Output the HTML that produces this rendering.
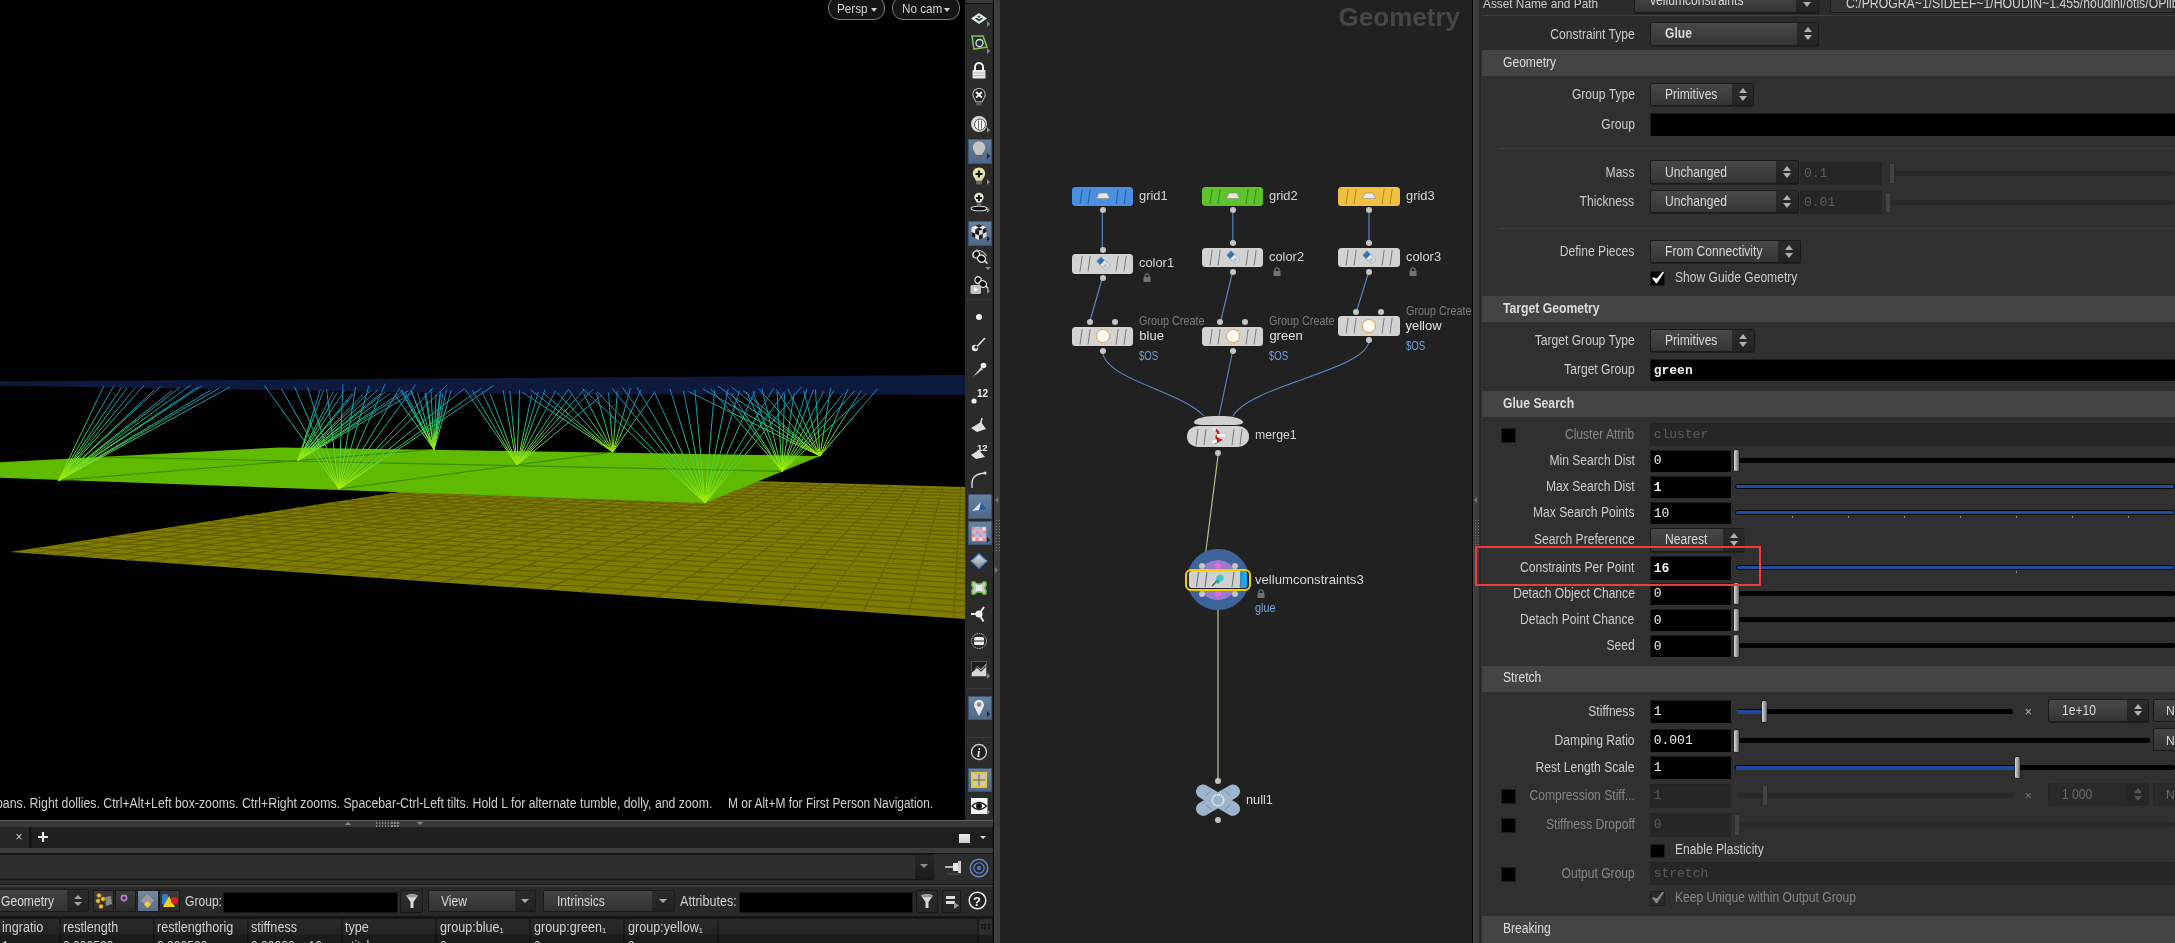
<!DOCTYPE html>
<html><head><meta charset="utf-8"><style>
html,body{margin:0;padding:0;width:2175px;height:943px;overflow:hidden;background:#000;font-family:"Liberation Sans",sans-serif}
div{box-sizing:border-box}
</style></head><body>
<div style="position:relative;width:2175px;height:943px;overflow:hidden;will-change:transform">
<div style="position:absolute;left:0px;top:0px;width:965px;height:820px;background:#000"></div><svg width="965" height="820" viewBox="0 0 965 820" style="position:absolute;left:0;top:0">
<defs><linearGradient id="f1" gradientUnits="userSpaceOnUse" x1="0" y1="388" x2="0" y2="480.3"><stop offset="0" stop-color="#1a80c4"/><stop offset="0.2" stop-color="#12a0b0"/><stop offset="0.5" stop-color="#22c078"/><stop offset="1" stop-color="#a8ec00"/></linearGradient><linearGradient id="f2" gradientUnits="userSpaceOnUse" x1="0" y1="392" x2="0" y2="460.5"><stop offset="0" stop-color="#1a80c4"/><stop offset="0.2" stop-color="#12a0b0"/><stop offset="0.5" stop-color="#22c078"/><stop offset="1" stop-color="#a8ec00"/></linearGradient><linearGradient id="f3" gradientUnits="userSpaceOnUse" x1="0" y1="386" x2="0" y2="489"><stop offset="0" stop-color="#1a80c4"/><stop offset="0.2" stop-color="#12a0b0"/><stop offset="0.5" stop-color="#22c078"/><stop offset="1" stop-color="#a8ec00"/></linearGradient><linearGradient id="f4" gradientUnits="userSpaceOnUse" x1="0" y1="392" x2="0" y2="449.3"><stop offset="0" stop-color="#1a80c4"/><stop offset="0.2" stop-color="#12a0b0"/><stop offset="0.5" stop-color="#22c078"/><stop offset="1" stop-color="#a8ec00"/></linearGradient><linearGradient id="f5" gradientUnits="userSpaceOnUse" x1="0" y1="392" x2="0" y2="465"><stop offset="0" stop-color="#1a80c4"/><stop offset="0.2" stop-color="#12a0b0"/><stop offset="0.5" stop-color="#22c078"/><stop offset="1" stop-color="#a8ec00"/></linearGradient><linearGradient id="f6" gradientUnits="userSpaceOnUse" x1="0" y1="391" x2="0" y2="452"><stop offset="0" stop-color="#1a80c4"/><stop offset="0.2" stop-color="#12a0b0"/><stop offset="0.5" stop-color="#22c078"/><stop offset="1" stop-color="#a8ec00"/></linearGradient><linearGradient id="f7" gradientUnits="userSpaceOnUse" x1="0" y1="389" x2="0" y2="503"><stop offset="0" stop-color="#1a80c4"/><stop offset="0.2" stop-color="#12a0b0"/><stop offset="0.5" stop-color="#22c078"/><stop offset="1" stop-color="#a8ec00"/></linearGradient><linearGradient id="f8" gradientUnits="userSpaceOnUse" x1="0" y1="391" x2="0" y2="471.3"><stop offset="0" stop-color="#1a80c4"/><stop offset="0.2" stop-color="#12a0b0"/><stop offset="0.5" stop-color="#22c078"/><stop offset="1" stop-color="#a8ec00"/></linearGradient><linearGradient id="f9" gradientUnits="userSpaceOnUse" x1="0" y1="389" x2="0" y2="456"><stop offset="0" stop-color="#1a80c4"/><stop offset="0.2" stop-color="#12a0b0"/><stop offset="0.5" stop-color="#22c078"/><stop offset="1" stop-color="#a8ec00"/></linearGradient></defs>
<defs><linearGradient id="fan" gradientUnits="userSpaceOnUse" x1="0" y1="386" x2="0" y2="500"><stop offset="0" stop-color="#1580c0"/><stop offset="0.45" stop-color="#20b088"/><stop offset="1" stop-color="#a8e800"/></linearGradient></defs>
<polygon points="10.0,552.0 516.0,474.0 1118.8,491.5 1400.0,649.7" fill="#7f7c00"/>
<path d="M529.2 474.4L32.0 553.5M542.0 474.8L54.6 555.1M555.0 475.1L77.8 556.8M568.2 475.5L101.6 558.4M581.6 475.9L126.0 560.2M595.2 476.3L151.1 561.9M609.0 476.7L176.8 563.7M623.0 477.1L203.3 565.6M637.2 477.5L230.4 567.5M651.5 477.9L258.3 569.5M666.1 478.4L286.9 571.5M680.9 478.8L316.3 573.5M695.9 479.2L346.4 575.7M711.1 479.7L377.3 577.8M726.5 480.1L409.1 580.1M742.0 480.6L441.7 582.4M757.8 481.0L475.2 584.7M773.7 481.5L509.6 587.1M789.8 482.0L544.9 589.6M806.2 482.4L581.1 592.2M822.6 482.9L618.3 594.8M839.3 483.4L656.5 597.4M856.1 483.9L695.7 600.2M873.2 484.4L735.9 603.0M890.3 484.9L777.2 605.9M907.7 485.4L819.6 608.9M925.2 485.9L863.1 612.0M942.8 486.4L907.8 615.1M960.7 486.9L953.7 618.3M978.6 487.5L1000.8 621.7M996.7 488.0L1049.2 625.1M1015.0 488.5L1098.8 628.5M1033.4 489.0L1149.7 632.1M1051.9 489.6L1202.1 635.8M1070.5 490.1L1255.8 639.6M1089.3 490.7L1310.9 643.5M1108.1 491.2L1367.5 647.4M34.9 548.2L1386.2 641.9M59.0 544.5L1372.8 634.4M82.3 540.9L1359.8 627.1M104.9 537.4L1347.3 620.1M126.8 534.0L1335.1 613.2M148.0 530.7L1323.3 606.6M168.6 527.6L1311.9 600.1M188.6 524.5L1300.8 593.9M208.0 521.5L1290.0 587.8M226.9 518.6L1279.5 581.9M245.2 515.7L1269.3 576.2M263.0 513.0L1259.4 570.6M280.3 510.3L1249.8 565.2M297.2 507.7L1240.4 559.9M313.6 505.2L1231.3 554.8M329.6 502.7L1222.4 549.8M345.1 500.3L1213.8 544.9M360.3 498.0L1205.3 540.2M375.1 495.7L1197.1 535.6M389.5 493.5L1189.1 531.1M403.6 491.3L1181.3 526.7M417.3 489.2L1173.7 522.4M430.7 487.2L1166.2 518.2M443.7 485.1L1159.0 514.1M456.5 483.2L1151.9 510.1M468.9 481.3L1145.0 506.2M481.1 479.4L1138.2 502.4M493.0 477.5L1131.6 498.7M504.6 475.8L1125.1 495.1" stroke="#656000" stroke-width="1.25" fill="none"/>
<polygon points="0.0,381.3 965.0,375.0 965.0,394.7 530.0,394.4 0.0,385.5" fill="#0e1a3d"/>
<polygon points="279.5,447.4 820.0,456.0 705.0,503.0 -174.0,471.6" fill="#60ba00"/>
<path d="M434 449.3L58.8 480.3M613 452L339 489M100 457L782 471.3" stroke="#3c8c00" stroke-width="1.2" fill="none"/>
<path d="M58.8 480.3L103.9 385.9M58.8 480.3L114.2 385.4M58.8 480.3L121.7 387.2M58.8 480.3L127.1 388.0M58.8 480.3L135.3 387.6M58.8 480.3L143.8 385.5M58.8 480.3L154.1 390.0M58.8 480.3L160.6 386.3M58.8 480.3L171.9 390.7M58.8 480.3L179.9 387.4M58.8 480.3L190.5 385.3M58.8 480.3L198.1 386.7M58.8 480.3L202.1 385.7M58.8 480.3L211.3 389.9M58.8 480.3L218.8 388.5M58.8 480.3L229.8 387.2" stroke="url(#f1)" stroke-width="1" fill="none"/>
<path d="M298.0 460.5L320.3 389.4M298.0 460.5L323.5 390.2M298.0 460.5L333.3 391.6M298.0 460.5L337.3 392.5M298.0 460.5L344.3 390.8M298.0 460.5L352.4 393.2M298.0 460.5L355.3 392.4M298.0 460.5L363.1 394.3M298.0 460.5L370.4 390.7M298.0 460.5L378.1 389.7M298.0 460.5L380.8 393.5M298.0 460.5L385.4 391.9M298.0 460.5L390.8 393.0M298.0 460.5L401.3 392.4M298.0 460.5L408.1 390.9M298.0 460.5L413.2 392.6" stroke="url(#f2)" stroke-width="1" fill="none"/>
<path d="M339.0 489.0L264.5 385.7M339.0 489.0L281.4 388.7M339.0 489.0L294.6 387.0M339.0 489.0L307.6 387.2M339.0 489.0L326.5 389.0M339.0 489.0L342.9 384.7M339.0 489.0L355.7 387.0M339.0 489.0L368.9 385.8M339.0 489.0L385.2 383.7M339.0 489.0L400.0 387.6M339.0 489.0L415.8 384.5M339.0 489.0L432.7 388.2M339.0 489.0L446.3 385.7M339.0 489.0L464.5 388.3M339.0 489.0L481.5 388.2M339.0 489.0L493.7 385.5" stroke="url(#f3)" stroke-width="1" fill="none"/>
<path d="M434.0 449.3L394.2 394.3M434.0 449.3L401.6 389.9M434.0 449.3L400.8 390.4M434.0 449.3L405.0 391.9M434.0 449.3L411.0 390.6M434.0 449.3L411.4 391.5M434.0 449.3L417.4 392.4M434.0 449.3L424.8 393.1M434.0 449.3L426.0 392.7M434.0 449.3L430.9 389.3M434.0 449.3L436.1 393.7M434.0 449.3L439.8 393.8M434.0 449.3L440.8 391.4M434.0 449.3L442.9 392.8M434.0 449.3L446.5 389.4M434.0 449.3L451.3 390.0" stroke="url(#f4)" stroke-width="1" fill="none"/>
<path d="M517.0 465.0L465.0 389.3M517.0 465.0L472.1 389.9M517.0 465.0L481.7 391.2M517.0 465.0L490.4 394.2M517.0 465.0L503.0 389.9M517.0 465.0L509.8 391.1M517.0 465.0L519.6 389.7M517.0 465.0L531.6 395.0M517.0 465.0L538.3 391.9M517.0 465.0L545.1 389.6M517.0 465.0L555.7 390.6M517.0 465.0L567.7 390.0M517.0 465.0L571.9 394.7M517.0 465.0L584.0 389.9M517.0 465.0L593.2 389.2M517.0 465.0L602.2 394.9" stroke="url(#f5)" stroke-width="1" fill="none"/>
<path d="M613.0 452.0L522.2 392.2M613.0 452.0L530.9 390.2M613.0 452.0L542.7 392.6M613.0 452.0L557.3 392.7M613.0 452.0L568.4 389.3M613.0 452.0L583.7 393.9M613.0 452.0L596.3 392.8M613.0 452.0L608.5 392.4M613.0 452.0L617.3 391.1M613.0 452.0L630.4 388.2M613.0 452.0L640.8 389.7M613.0 452.0L654.6 392.2" stroke="url(#f6)" stroke-width="1" fill="none"/>
<path d="M705.0 503.0L582.7 388.7M705.0 503.0L597.3 391.9M705.0 503.0L612.1 388.2M705.0 503.0L622.3 387.4M705.0 503.0L636.8 387.2M705.0 503.0L654.1 391.4M705.0 503.0L670.0 388.9M705.0 503.0L683.6 390.8M705.0 503.0L694.8 390.0M705.0 503.0L714.5 390.7M705.0 503.0L728.2 388.9M705.0 503.0L739.4 390.7M705.0 503.0L755.0 390.8M705.0 503.0L773.5 388.4M705.0 503.0L784.7 391.7M705.0 503.0L801.3 387.0" stroke="url(#f7)" stroke-width="1" fill="none"/>
<path d="M782.0 471.3L710.8 388.9M782.0 471.3L725.6 392.8M782.0 471.3L731.3 393.0M782.0 471.3L746.5 391.9M782.0 471.3L752.9 391.3M782.0 471.3L761.8 388.1M782.0 471.3L777.0 391.9M782.0 471.3L784.6 393.6M782.0 471.3L794.2 393.2M782.0 471.3L806.8 389.3M782.0 471.3L813.5 389.8M782.0 471.3L823.6 391.5M782.0 471.3L834.0 390.5M782.0 471.3L843.4 393.5M782.0 471.3L854.9 390.7M782.0 471.3L866.5 393.4" stroke="url(#f8)" stroke-width="1" fill="none"/>
<path d="M820.0 456.0L688.5 391.5M820.0 456.0L703.3 389.2M820.0 456.0L717.8 386.1M820.0 456.0L731.6 387.1M820.0 456.0L743.3 390.8M820.0 456.0L758.6 388.8M820.0 456.0L776.2 389.3M820.0 456.0L788.1 389.1M820.0 456.0L803.8 390.7M820.0 456.0L815.4 389.4M820.0 456.0L830.6 387.7M820.0 456.0L848.0 389.0M820.0 456.0L861.1 390.6M820.0 456.0L877.5 388.7" stroke="url(#f9)" stroke-width="1" fill="none"/>
</svg><div style="position:absolute;left:828px;top:-4px;width:57px;height:24px;border:1.5px solid #7a7a7a;border-radius:11px;background:#161616;box-sizing:border-box"></div><div style="position:absolute;left:837px;top:-1.0px;line-height:19px;font-size:13px;color:#d0d0d0;font-weight:normal;font-family:'Liberation Sans',sans-serif;white-space:nowrap;transform:scaleX(0.9);transform-origin:left center;">Persp</div><div style="position:absolute;left:871px;top:8px;width:0;height:0;border-left:3.5px solid transparent;border-right:3.5px solid transparent;border-top:4px solid #d0d0d0"></div><div style="position:absolute;left:892px;top:-4px;width:68px;height:24px;border:1.5px solid #7a7a7a;border-radius:11px;background:#161616;box-sizing:border-box"></div><div style="position:absolute;left:901.5px;top:-1.0px;line-height:19px;font-size:13px;color:#d0d0d0;font-weight:normal;font-family:'Liberation Sans',sans-serif;white-space:nowrap;transform:scaleX(0.9);transform-origin:left center;">No cam</div><div style="position:absolute;left:944px;top:8px;width:0;height:0;border-left:3.5px solid transparent;border-right:3.5px solid transparent;border-top:4px solid #d0d0d0"></div><div style="position:absolute;left:-4px;top:793.0px;line-height:20px;font-size:14px;color:#cfcfcf;font-weight:normal;font-family:'Liberation Sans',sans-serif;white-space:nowrap;transform:scaleX(0.878);transform-origin:left center;">pans. Right dollies. Ctrl+Alt+Left box-zooms. Ctrl+Right zooms. Spacebar-Ctrl-Left tilts. Hold L for alternate tumble, dolly, and zoom.</div><div style="position:absolute;left:727.5px;top:793.0px;line-height:20px;font-size:14px;color:#cfcfcf;font-weight:normal;font-family:'Liberation Sans',sans-serif;white-space:nowrap;transform:scaleX(0.852);transform-origin:left center;">M or Alt+M for First Person Navigation.</div><div style="position:absolute;left:965px;top:0px;width:28px;height:820px;background:#2b2b2b"></div><div style="position:absolute;left:967px;top:0px;width:26px;height:3px;background:#3a3a3a"></div><div style="position:absolute;left:965px;top:3px;width:28px;height:1px;background:#111"></div><div style="position:absolute;left:993px;top:0px;width:1px;height:943px;background:#000"></div><div style="position:absolute;left:994px;top:0px;width:6px;height:943px;background:#3e3e3e;border-left:1px solid #474747"></div><div style="position:absolute;left:967.5px;top:138.7px;width:24.0px;height:25.1px;background:linear-gradient(#64809f,#50688a);border:1px solid #42546c"></div><div style="position:absolute;left:967.5px;top:220.7px;width:24.0px;height:25.3px;background:linear-gradient(#64809f,#50688a);border:1px solid #42546c"></div><div style="position:absolute;left:967.5px;top:494.3px;width:24.0px;height:24.4px;background:linear-gradient(#64809f,#50688a);border:1px solid #42546c"></div><div style="position:absolute;left:967.5px;top:521.3px;width:24.0px;height:23.7px;background:linear-gradient(#64809f,#50688a);border:1px solid #42546c"></div><div style="position:absolute;left:967.5px;top:695.6px;width:24.0px;height:24.6px;background:linear-gradient(#64809f,#50688a);border:1px solid #42546c"></div><div style="position:absolute;left:967.5px;top:767.6px;width:24.0px;height:24.7px;background:linear-gradient(#64809f,#50688a);border:1px solid #42546c"></div><div style="position:absolute;left:966.0px;top:299.0px;width:26.0px;height:1.0px;background:#3c3c3c"></div><div style="position:absolute;left:966.0px;top:688.0px;width:26.0px;height:1.0px;background:#3c3c3c"></div><div style="position:absolute;left:966.0px;top:736.5px;width:26.0px;height:1.0px;background:#3c3c3c"></div><svg style="position:absolute;left:969.0px;top:9.0px;overflow:visible" width="20" height="20" viewBox="0 0 20 20"><path d="M10 4 L18 9.5 L10 15 L2 9.5 Z" fill="#e0e4e4"/><path d="M10 6.5 L14 9.5 L10 12.5 L6 9.5 Z" fill="#304040"/><path d="M6 7 L10 9.5 M14 7 L10 9.5" stroke="#e0e4e4" stroke-width="1.2"/></svg><div style="position:absolute;left:986.6px;top:21.2px;width:0;height:0;border-top:3.8px solid transparent;border-bottom:3.8px solid transparent;border-left:3.8px solid #8a8a8a"></div><svg style="position:absolute;left:969.0px;top:33.0px;overflow:visible" width="20" height="20" viewBox="0 0 20 20"><path d="M3 3 L14 3 L18 14 L5 16 Z" fill="#203030" stroke="#80c050" stroke-width="1.6"/><circle cx="10.5" cy="10" r="3.5" fill="none" stroke="#e0e0e0" stroke-width="1.3"/></svg><div style="position:absolute;left:986.6px;top:48.2px;width:0;height:0;border-top:3.8px solid transparent;border-bottom:3.8px solid transparent;border-left:3.8px solid #8a8a8a"></div><svg style="position:absolute;left:969.0px;top:61.0px;overflow:visible" width="20" height="20" viewBox="0 0 20 20"><path d="M6 9 V6 A4 4 0 0 1 14 6 V9" stroke="#f0f0f0" stroke-width="2" fill="none"/><rect x="3.5" y="9" width="13" height="8.5" rx="1" fill="#e8e8e4"/><path d="M4 12 H16 M4 14.5 H16" stroke="#b0b0a8" stroke-width="0.8"/></svg><svg style="position:absolute;left:969.0px;top:87.0px;overflow:visible" width="20" height="20" viewBox="0 0 20 20"><path d="M10 1.5 C14 1.5 16.2 4.5 16.2 7.8 C16.2 10.8 13.5 12.2 13.2 14.8 L6.8 14.8 C6.5 12.2 3.8 10.8 3.8 7.8 C3.8 4.5 6 1.5 10 1.5 Z" fill="#1c2424" stroke="#b8b8b8" stroke-width="1.1"/><path d="M7.2 5 L12.8 10.6 M12.8 5 L7.2 10.6" stroke="#f4f4f4" stroke-width="2"/><rect x="7" y="15" width="6" height="3.5" rx="1" fill="#5a5a5a"/></svg><svg style="position:absolute;left:969.0px;top:114.0px;overflow:visible" width="20" height="20" viewBox="0 0 20 20"><circle cx="10" cy="10" r="8" fill="#d8d8d8"/><circle cx="11" cy="10.5" r="5.5" fill="#f4f4f4" stroke="#555" stroke-width="1"/><path d="M9.5 6.5 V14.5 M12.5 6.5 V14.5" stroke="#666" stroke-width="1"/></svg><div style="position:absolute;left:986.6px;top:127.2px;width:0;height:0;border-top:3.8px solid transparent;border-bottom:3.8px solid transparent;border-left:3.8px solid #8a8a8a"></div><svg style="position:absolute;left:969.0px;top:140.0px;overflow:visible" width="20" height="20" viewBox="0 0 20 20"><path d="M10 1.5 C14 1.5 16.2 4.5 16.2 7.8 C16.2 10.8 13.5 12.2 13.2 14.8 L6.8 14.8 C6.5 12.2 3.8 10.8 3.8 7.8 C3.8 4.5 6 1.5 10 1.5 Z" fill="#c8c6c0"/><rect x="7" y="15" width="6" height="3.5" rx="1" fill="#666"/></svg><div style="position:absolute;left:986.6px;top:153.2px;width:0;height:0;border-top:3.8px solid transparent;border-bottom:3.8px solid transparent;border-left:3.8px solid #222"></div><svg style="position:absolute;left:969.0px;top:166.0px;overflow:visible" width="20" height="20" viewBox="0 0 20 20"><path d="M10 1.5 C14 1.5 16.2 4.5 16.2 7.8 C16.2 10.8 13.5 12.2 13.2 14.8 L6.8 14.8 C6.5 12.2 3.8 10.8 3.8 7.8 C3.8 4.5 6 1.5 10 1.5 Z" fill="#e4e2a8"/><path d="M10 4.5 V11.5 M6.5 8 H13.5" stroke="#1a1a1a" stroke-width="2.2"/><rect x="7" y="15" width="6" height="3.5" rx="1" fill="#666"/></svg><div style="position:absolute;left:986.6px;top:179.2px;width:0;height:0;border-top:3.8px solid transparent;border-bottom:3.8px solid transparent;border-left:3.8px solid #8a8a8a"></div><svg style="position:absolute;left:969.0px;top:192.0px;overflow:visible" width="20" height="20" viewBox="0 0 20 20"><ellipse cx="10" cy="16.5" rx="8" ry="2.3" fill="#111" stroke="#d8d8d8" stroke-width="1.1"/><g transform="translate(2.5 -0.5) scale(0.75)"><path d="M10 1.5 C14 1.5 16.2 4.5 16.2 7.8 C16.2 10.8 13.5 12.2 13.2 14.8 L6.8 14.8 C6.5 12.2 3.8 10.8 3.8 7.8 C3.8 4.5 6 1.5 10 1.5 Z" fill="#ecebd0"/></g><path d="M10 3 V9 M7 6 H13" stroke="#1a1a1a" stroke-width="2"/><rect x="8" y="11.5" width="4" height="3" fill="#777"/></svg><div style="position:absolute;left:986.6px;top:207.2px;width:0;height:0;border-top:3.8px solid transparent;border-bottom:3.8px solid transparent;border-left:3.8px solid #8a8a8a"></div><svg style="position:absolute;left:969.0px;top:222.0px;overflow:visible" width="20" height="20" viewBox="0 0 20 20"><g stroke="none"><path d="M10 2 L17.5 5.5 L10 9 L2.5 5.5 Z" fill="#f0f0f0"/><path d="M10 2 L13.75 3.75 L10 5.5 L6.25 3.75 Z M10 5.5 L13.75 7.25 L10 9 L6.25 7.25 Z" fill="#222"/><path d="M2.5 5.5 L10 9 L10 18 L2.5 14.5 Z" fill="#e8e8e8"/><path d="M2.5 10 L6.25 11.75 L6.25 16.25 L2.5 14.5 Z M6.25 7.25 L10 9 L10 13.5 L6.25 11.75 Z" fill="#1a1a1a"/><path d="M17.5 5.5 L10 9 L10 18 L17.5 14.5 Z" fill="#d8d8d8"/><path d="M17.5 5.5 L13.75 7.25 L13.75 11.75 L17.5 10 Z M13.75 11.75 L10 13.5 L10 18 L13.75 16.25 Z" fill="#222"/></g></svg><div style="position:absolute;left:986.6px;top:236.2px;width:0;height:0;border-top:3.8px solid transparent;border-bottom:3.8px solid transparent;border-left:3.8px solid #222"></div><svg style="position:absolute;left:969.0px;top:248.0px;overflow:visible" width="20" height="20" viewBox="0 0 20 20"><g transform="rotate(25 10 10)"><ellipse cx="6" cy="8" rx="3.2" ry="3.6" fill="#111" stroke="#e8e8e8" stroke-width="1.3"/><ellipse cx="12.5" cy="9.5" rx="4" ry="3.6" fill="#111" stroke="#e8e8e8" stroke-width="1.3"/><path d="M16 10 L20 11.5" stroke="#ddd" stroke-width="1.6"/><path d="M4 4 Q10 1 16 5" stroke="#ccc" stroke-width="1" fill="none"/></g></svg><div style="position:absolute;left:984.5px;top:266.8px;width:0;height:0;border-left:3.5px solid transparent;border-right:3.5px solid transparent;border-top:3.5px solid #8a8a8a"></div><svg style="position:absolute;left:969.0px;top:275.0px;overflow:visible" width="20" height="20" viewBox="0 0 20 20"><g transform="rotate(25 10 10)"><ellipse cx="7" cy="6" rx="3" ry="3.3" fill="#111" stroke="#e8e8e8" stroke-width="1.2"/><ellipse cx="13" cy="7.5" rx="3.8" ry="3.3" fill="#111" stroke="#e8e8e8" stroke-width="1.2"/><path d="M16.5 8 L20 9.5" stroke="#ddd" stroke-width="1.5"/></g><rect x="1.5" y="10" width="10.5" height="9" rx="1.5" fill="#c0c0c0"/><path d="M5 12 L9.5 14.5 L5 17 Z" fill="#f4f4f4"/></svg><div style="position:absolute;left:986.6px;top:288.2px;width:0;height:0;border-top:3.8px solid transparent;border-bottom:3.8px solid transparent;border-left:3.8px solid #8a8a8a"></div><svg style="position:absolute;left:969.0px;top:307.0px;overflow:visible" width="20" height="20" viewBox="0 0 20 20"><circle cx="10" cy="10" r="3" fill="#f0f0f0"/></svg><svg style="position:absolute;left:969.0px;top:334.0px;overflow:visible" width="20" height="20" viewBox="0 0 20 20"><path d="M7.5 13 L16 4" stroke="#e8e8e8" stroke-width="1.6"/><circle cx="6" cy="14" r="3.2" fill="#e8e8e8"/><circle cx="7" cy="13.2" r="1.6" fill="#333"/></svg><svg style="position:absolute;left:969.0px;top:360.0px;overflow:visible" width="20" height="20" viewBox="0 0 20 20"><path d="M4 17 L12 7 L14 9 Z" fill="#d0d0d0"/><circle cx="14.5" cy="5.5" r="2.8" fill="#f0f0f0"/></svg><svg style="position:absolute;left:969.0px;top:387.0px;overflow:visible" width="20" height="20" viewBox="0 0 20 20"><circle cx="5" cy="14" r="2.6" fill="#f0f0f0"/><text x="8" y="10" font-family="Liberation Sans" font-weight="bold" font-size="10" fill="#f0f0f0">12</text></svg><svg style="position:absolute;left:969.0px;top:415.0px;overflow:visible" width="20" height="20" viewBox="0 0 20 20"><path d="M2 13 L12 7 L17 14 L8 17 Z" fill="#e0e0e0"/><path d="M11 11 L13 3" stroke="#e0e0e0" stroke-width="1.5"/></svg><svg style="position:absolute;left:969.0px;top:442.0px;overflow:visible" width="20" height="20" viewBox="0 0 20 20"><path d="M2 13 L10 8 L16 15 L7 17 Z" fill="#e0e0e0"/><text x="8" y="9" font-family="Liberation Sans" font-weight="bold" font-size="9.5" fill="#f0f0f0">12</text></svg><svg style="position:absolute;left:969.0px;top:470.0px;overflow:visible" width="20" height="20" viewBox="0 0 20 20"><path d="M3 18 V13 Q3 4 16 3" stroke="#e0e0e0" stroke-width="1.3" fill="none"/><circle cx="16" cy="3" r="1.5" fill="#e0e0e0"/></svg><svg style="position:absolute;left:969.0px;top:497.0px;overflow:visible" width="20" height="20" viewBox="0 0 20 20"><path d="M3 14 L12 5 L17 12 Z" fill="#2060b0"/><path d="M3 14 L12 5 L10 13 Z" fill="#d8e4f0"/></svg><svg style="position:absolute;left:969.0px;top:524.0px;overflow:visible" width="20" height="20" viewBox="0 0 20 20"><rect x="3" y="3" width="14" height="14" fill="#f0e0e0" stroke="#aaa" stroke-width="0.6"/><path d="M3 3h3.5v3.5H3zM10 3h3.5v3.5H10zM6.5 6.5H10V10H6.5zM13.5 6.5H17V10h-3.5zM3 10h3.5v3.5H3zM10 10h3.5v3.5H10zM6.5 13.5H10V17H6.5zM13.5 13.5H17V17h-3.5z" fill="#e89090"/><path d="M6.5 3H10v3.5H6.5zM3 6.5h3.5V10H3zM10 6.5h3.5V10H10zM6.5 10H10v3.5H6.5zM13.5 10H17v3.5h-3.5z" fill="#a8c0e8"/></svg><div style="position:absolute;left:986.6px;top:537.2px;width:0;height:0;border-top:3.8px solid transparent;border-bottom:3.8px solid transparent;border-left:3.8px solid #222"></div><svg style="position:absolute;left:969.0px;top:551.0px;overflow:visible" width="20" height="20" viewBox="0 0 20 20"><defs><linearGradient id="dg" x1="0" y1="0" x2="0" y2="1"><stop offset="0" stop-color="#e8e8e8"/><stop offset="1" stop-color="#8a8a8a"/></linearGradient></defs><path d="M10 3 L17.5 10 L10 17 L2.5 10 Z" fill="url(#dg)" stroke="#4a90e0" stroke-width="1.6"/><path d="M2.5 10 L10 8 L17.5 10" stroke="#bbb" stroke-width="0.8" fill="none"/></svg><svg style="position:absolute;left:969.0px;top:578.0px;overflow:visible" width="20" height="20" viewBox="0 0 20 20"><path d="M3 4 Q6 3 7 5 Q10 7 13 5 Q14 3 17 4 Q18 7 16 10 Q18 13 17 16 Q14 17 13 15 Q10 13 7 15 Q6 17 3 16 Q2 13 4 10 Q2 7 3 4 Z" fill="#c8c8c8" stroke="#58b030" stroke-width="1.5"/><rect x="7" y="7" width="6" height="6" fill="#e8e8e8"/></svg><svg style="position:absolute;left:969.0px;top:604.0px;overflow:visible" width="20" height="20" viewBox="0 0 20 20"><path d="M10 10 L15 3 M10 10 L2 10 M10 10 L14.5 17.5" stroke="#e8e8e8" stroke-width="2"/><circle cx="10" cy="10" r="3.6" fill="#f0f0f0"/></svg><svg style="position:absolute;left:969.0px;top:631.0px;overflow:visible" width="20" height="20" viewBox="0 0 20 20"><circle cx="10" cy="10" r="7.5" fill="none" stroke="#c8c8c8" stroke-width="1" stroke-dasharray="1.5 1"/><rect x="5" y="6" width="10" height="8" rx="1.5" fill="#f0f0f0"/><path d="M5 10 H15" stroke="#444" stroke-width="1.2"/></svg><svg style="position:absolute;left:969.0px;top:659.0px;overflow:visible" width="20" height="20" viewBox="0 0 20 20"><rect x="2.5" y="2.5" width="15" height="15" fill="#1c1c1c" stroke="#555" stroke-width="1"/><path d="M3 13 L8 7 L12 10 L17 5 V17 H3 Z" fill="#d8d8d8"/><path d="M3 13 L8 8 L12 12 L17 7" stroke="#333" stroke-width="1.2" fill="none"/></svg><div style="position:absolute;left:986.6px;top:673.2px;width:0;height:0;border-top:3.8px solid transparent;border-bottom:3.8px solid transparent;border-left:3.8px solid #8a8a8a"></div><svg style="position:absolute;left:969.0px;top:698.0px;overflow:visible" width="20" height="20" viewBox="0 0 20 20"><path d="M10 18 L5.5 9 A5 5 0 1 1 14.5 9 Z" fill="#e8e8e8"/><circle cx="10" cy="6.5" r="2.2" fill="#888"/></svg><div style="position:absolute;left:986.6px;top:711.2px;width:0;height:0;border-top:3.8px solid transparent;border-bottom:3.8px solid transparent;border-left:3.8px solid #222"></div><svg style="position:absolute;left:969.0px;top:742.0px;overflow:visible" width="20" height="20" viewBox="0 0 20 20"><circle cx="10" cy="10" r="7.5" fill="#202020" stroke="#c8c8c8" stroke-width="1.4"/><text x="8" y="14.5" font-family="Liberation Serif" font-style="italic" font-weight="bold" font-size="12" fill="#eee">i</text></svg><svg style="position:absolute;left:969.0px;top:770.0px;overflow:visible" width="20" height="20" viewBox="0 0 20 20"><rect x="3" y="3" width="14" height="14" fill="#c8c8c8" stroke="#e8c830" stroke-width="2"/><path d="M10 3 V17 M3 10 H17" stroke="#e8c830" stroke-width="1.8"/><path d="M10 4 V16 M4 10 H16" stroke="#555" stroke-width="0.8"/></svg><svg style="position:absolute;left:969.0px;top:796.0px;overflow:visible" width="20" height="20" viewBox="0 0 20 20"><rect x="2" y="2" width="16.5" height="16" fill="#f4f4f4"/><path d="M3 10 Q10 3 17.5 10 Q10 17 3 10 Z" fill="#fff" stroke="#222" stroke-width="1.3"/><circle cx="10" cy="10" r="3" fill="#111"/></svg><div style="position:absolute;left:986.6px;top:809.2px;width:0;height:0;border-top:3.8px solid transparent;border-bottom:3.8px solid transparent;border-left:3.8px solid #8a8a8a"></div><div style="position:absolute;left:0.0px;top:820.0px;width:993.0px;height:1.0px;background:#5e5e5e"></div><div style="position:absolute;left:0.0px;top:821.0px;width:993.0px;height:6.0px;background:#3a3a3a"></div><div style="position:absolute;left:344.7px;top:822.1px;width:0;height:0;border-left:3.8px solid transparent;border-right:3.8px solid transparent;border-bottom:3.8px solid #8c8c8c"></div><div style="position:absolute;left:375.5px;top:822.3px;width:1.5px;height:1.5px;background:#8a8a8a"></div><div style="position:absolute;left:375.5px;top:825.3px;width:1.5px;height:1.5px;background:#8a8a8a"></div><div style="position:absolute;left:378.6px;top:822.3px;width:1.5px;height:1.5px;background:#8a8a8a"></div><div style="position:absolute;left:378.6px;top:825.3px;width:1.5px;height:1.5px;background:#8a8a8a"></div><div style="position:absolute;left:381.7px;top:822.3px;width:1.5px;height:1.5px;background:#8a8a8a"></div><div style="position:absolute;left:381.7px;top:825.3px;width:1.5px;height:1.5px;background:#8a8a8a"></div><div style="position:absolute;left:384.8px;top:822.3px;width:1.5px;height:1.5px;background:#8a8a8a"></div><div style="position:absolute;left:384.8px;top:825.3px;width:1.5px;height:1.5px;background:#8a8a8a"></div><div style="position:absolute;left:387.9px;top:822.3px;width:1.5px;height:1.5px;background:#8a8a8a"></div><div style="position:absolute;left:387.9px;top:825.3px;width:1.5px;height:1.5px;background:#8a8a8a"></div><div style="position:absolute;left:391.0px;top:822.3px;width:1.5px;height:1.5px;background:#8a8a8a"></div><div style="position:absolute;left:391.0px;top:825.3px;width:1.5px;height:1.5px;background:#8a8a8a"></div><div style="position:absolute;left:394.1px;top:822.3px;width:1.5px;height:1.5px;background:#8a8a8a"></div><div style="position:absolute;left:394.1px;top:825.3px;width:1.5px;height:1.5px;background:#8a8a8a"></div><div style="position:absolute;left:397.2px;top:822.3px;width:1.5px;height:1.5px;background:#8a8a8a"></div><div style="position:absolute;left:397.2px;top:825.3px;width:1.5px;height:1.5px;background:#8a8a8a"></div><div style="position:absolute;left:416.7px;top:822.1px;width:0;height:0;border-left:3.8px solid transparent;border-right:3.8px solid transparent;border-top:3.8px solid #8c8c8c"></div><div style="position:absolute;left:0.0px;top:827.0px;width:993.0px;height:20.5px;background:#1e1e1e"></div><div style="position:absolute;left:0.0px;top:827.0px;width:28.7px;height:20.5px;background:#262626"></div><div style="position:absolute;left:28.7px;top:827.0px;width:2.3px;height:20.5px;background:#141414"></div><div style="position:absolute;left:15.5px;top:827.5px;line-height:18px;font-size:12px;color:#d0d0d0;font-weight:normal;font-family:'Liberation Sans',sans-serif;white-space:nowrap;transform:scaleX(1);transform-origin:left center;">×</div><svg style="position:absolute;left:37px;top:831px;overflow:visible" width="12" height="12" viewBox="0 0 12 12"><path d="M6 1 V11 M1 6 H11" stroke="#e8e8e8" stroke-width="2.2"/></svg><div style="position:absolute;left:959.0px;top:834.0px;width:11.0px;height:9.0px;background:linear-gradient(#f0f0f0,#c8c8c8)"></div><div style="position:absolute;left:980.0px;top:835.8px;width:0;height:0;border-left:3.5px solid transparent;border-right:3.5px solid transparent;border-top:3.5px solid #e0e0e0"></div><div style="position:absolute;left:0.0px;top:847.5px;width:993.0px;height:5.5px;background:#3c3c3c"></div><div style="position:absolute;left:0.0px;top:853.0px;width:993.0px;height:1.0px;background:#141414"></div><div style="position:absolute;left:0.0px;top:854.0px;width:993.0px;height:30.0px;background:#2c2c2c"></div><div style="position:absolute;left:-2.0px;top:853.7px;width:935.7px;height:26.1px;background:#2e2e2e;border:1px solid #151515;border-radius:2px"></div><div style="position:absolute;left:914.8px;top:854.7px;width:18.9px;height:24.1px;background:linear-gradient(#262626,#1c1c1c)"></div><div style="position:absolute;left:919.8px;top:864.4px;width:0;height:0;border-left:4.2px solid transparent;border-right:4.2px solid transparent;border-top:4.2px solid #8a8a8a"></div><svg style="position:absolute;left:944px;top:858px;overflow:visible" width="20" height="18" viewBox="0 0 20 18"><path d="M1 9 L9 9" stroke="#f0f0f0" stroke-width="1.4"/><path d="M9 5 L14 5 L14 13 L9 13 Z" fill="#e8e8e8"/><path d="M14 3 L17 3 L17 15 L14 15 Z" fill="#d0d0d0"/><path d="M3 16 H17" stroke="#555" stroke-width="1"/></svg><svg style="position:absolute;left:969px;top:857.5px;overflow:visible" width="20" height="20" viewBox="0 0 20 20"><circle cx="10" cy="10" r="8.8" fill="none" stroke="#6a8ed0" stroke-width="1.4"/><circle cx="10" cy="10" r="5.2" fill="none" stroke="#6a8ed0" stroke-width="1.1"/><circle cx="10" cy="10" r="2.2" fill="#3870d8"/></svg><div style="position:absolute;left:0.0px;top:884.0px;width:993.0px;height:1.0px;background:#161616"></div><div style="position:absolute;left:0.0px;top:885.0px;width:993.0px;height:2.0px;background:#3a3a3a"></div><div style="position:absolute;left:0.0px;top:887.0px;width:993.0px;height:31.0px;background:#292929"></div><div style="position:absolute;left:-3.0px;top:889.4px;width:92.0px;height:22.6px;background:linear-gradient(#434343,#323232);border:1px solid #1a1a1a;border-radius:2px"></div><div style="position:absolute;left:67.0px;top:890.4px;width:21.0px;height:20.6px;background:linear-gradient(#2b2b2b,#222)"></div><div style="position:absolute;left:73.8px;top:894.8px;width:0;height:0;border-left:4.2px solid transparent;border-right:4.2px solid transparent;border-bottom:4.2px solid #a0a0a0"></div><div style="position:absolute;left:73.8px;top:902.4px;width:0;height:0;border-left:4.2px solid transparent;border-right:4.2px solid transparent;border-top:4.2px solid #a0a0a0"></div><div style="position:absolute;left:0.5px;top:890.7px;line-height:20px;font-size:14px;color:#d8d8d8;font-weight:normal;font-family:'Liberation Sans',sans-serif;white-space:nowrap;transform:scaleX(0.864);transform-origin:left center;">Geometry</div><div style="position:absolute;left:93.0px;top:890.0px;width:20.8px;height:22.0px;background:linear-gradient(#3a3a3a,#2c2c2c);border:1px solid #1a1a1a"></div><div style="position:absolute;left:115.0px;top:890.0px;width:20.9px;height:22.0px;background:linear-gradient(#3a3a3a,#2c2c2c);border:1px solid #1a1a1a"></div><div style="position:absolute;left:137.0px;top:890.0px;width:21.6px;height:22.0px;background:linear-gradient(#7088a8,#5a7090);border:1px solid #1a1a1a"></div><div style="position:absolute;left:159.3px;top:890.0px;width:20.7px;height:22.0px;background:linear-gradient(#3a3a3a,#2c2c2c);border:1px solid #1a1a1a"></div><svg style="position:absolute;left:94px;top:891px;overflow:visible" width="20" height="20" viewBox="0 0 20 20"><g fill="#f0c030" stroke="#806010" stroke-width="0.6"><circle cx="5" cy="4.5" r="2.2"/><circle cx="4" cy="10" r="2.2"/><circle cx="9" cy="8" r="2.2"/><circle cx="7" cy="15.5" r="2.2"/></g><path d="M11 6 L17 5 L18 13 L12 15 Z" fill="#888"/></svg><svg style="position:absolute;left:115px;top:891px;overflow:visible" width="20" height="20" viewBox="0 0 20 20"><circle cx="9" cy="7" r="2.6" fill="none" stroke="#c080d0" stroke-width="1.6"/></svg><svg style="position:absolute;left:137px;top:891px;overflow:visible" width="21" height="20" viewBox="0 0 21 20"><path d="M10.5 2 L18 9.5 L10.5 17 L3 9.5 Z" fill="#9a9a9a" stroke="#555" stroke-width="0.6"/><path d="M10.5 10 L14 13.5 L10.5 17 L7 13.5 Z" fill="#f0d040"/></svg><svg style="position:absolute;left:159px;top:891px;overflow:visible" width="21" height="20" viewBox="0 0 21 20"><rect x="3" y="3" width="6" height="11" rx="2" fill="#3080d0"/><path d="M10 5 L16 16 L4 16 Z" fill="#f0d020"/><circle cx="15.5" cy="9.5" r="3.6" fill="#e02020"/></svg><div style="position:absolute;left:184.6px;top:891.4px;line-height:20px;font-size:14px;color:#d0d0d0;font-weight:normal;font-family:'Liberation Sans',sans-serif;white-space:nowrap;transform:scaleX(0.864);transform-origin:left center;">Group:</div><div style="position:absolute;left:222.8px;top:891.7px;width:175.2px;height:21.3px;background:#000;border:1px solid #1a1a1a"></div><div style="position:absolute;left:400.0px;top:890.0px;width:23.0px;height:23.0px;background:linear-gradient(#2e2e2e,#242424);border:1px solid #161616;border-radius:2px"></div><svg style="position:absolute;left:404.5px;top:893px;overflow:visible" width="14" height="17" viewBox="0 0 14 17"><path d="M1 2.5 Q7 -0.5 13 2.5 L8.5 9 V15 H5.5 V9 Z" fill="#d8d8d8"/><ellipse cx="7" cy="2.8" rx="5.5" ry="1.6" fill="#999"/></svg><div style="position:absolute;left:427.6px;top:889.5px;width:108.0px;height:22.5px;background:linear-gradient(#434343,#323232);border:1px solid #1a1a1a;border-radius:2px"></div><div style="position:absolute;left:515.0px;top:890.5px;width:19.6px;height:20.5px;background:linear-gradient(#2b2b2b,#222)"></div><div style="position:absolute;left:521.0px;top:898.6px;width:0;height:0;border-left:4.3px solid transparent;border-right:4.3px solid transparent;border-top:4.3px solid #a8a8a8"></div><div style="position:absolute;left:441.0px;top:890.8px;line-height:20px;font-size:14px;color:#d8d8d8;font-weight:normal;font-family:'Liberation Sans',sans-serif;white-space:nowrap;transform:scaleX(0.864);transform-origin:left center;">View</div><div style="position:absolute;left:542.5px;top:889.5px;width:132.0px;height:22.5px;background:linear-gradient(#434343,#323232);border:1px solid #1a1a1a;border-radius:2px"></div><div style="position:absolute;left:652.0px;top:890.5px;width:21.5px;height:20.5px;background:linear-gradient(#2b2b2b,#222)"></div><div style="position:absolute;left:659.0px;top:898.6px;width:0;height:0;border-left:4.3px solid transparent;border-right:4.3px solid transparent;border-top:4.3px solid #a8a8a8"></div><div style="position:absolute;left:556.5px;top:890.8px;line-height:20px;font-size:14px;color:#d8d8d8;font-weight:normal;font-family:'Liberation Sans',sans-serif;white-space:nowrap;transform:scaleX(0.864);transform-origin:left center;">Intrinsics</div><div style="position:absolute;left:679.5px;top:891.4px;line-height:20px;font-size:14px;color:#d0d0d0;font-weight:normal;font-family:'Liberation Sans',sans-serif;white-space:nowrap;transform:scaleX(0.9);transform-origin:left center;">Attributes:</div><div style="position:absolute;left:739.3px;top:891.7px;width:173.3px;height:21.3px;background:#000;border:1px solid #1a1a1a"></div><div style="position:absolute;left:915.8px;top:890.0px;width:21.8px;height:23.0px;background:linear-gradient(#2e2e2e,#242424);border:1px solid #161616;border-radius:2px"></div><svg style="position:absolute;left:919.7px;top:893px;overflow:visible" width="14" height="17" viewBox="0 0 14 17"><path d="M1 2.5 Q7 -0.5 13 2.5 L8.5 9 V15 H5.5 V9 Z" fill="#d8d8d8"/><ellipse cx="7" cy="2.8" rx="5.5" ry="1.6" fill="#999"/></svg><div style="position:absolute;left:942.0px;top:890.0px;width:19.0px;height:23.0px;background:linear-gradient(#2e2e2e,#242424);border:1px solid #161616"></div><svg style="position:absolute;left:944px;top:892px;overflow:visible" width="16" height="18" viewBox="0 0 16 18"><rect x="2" y="4" width="9" height="3" fill="#ddd"/><rect x="2" y="9" width="9" height="3" fill="#ddd"/><path d="M10 10 L15 13.5 L10 17 Z" fill="#999"/></svg><svg style="position:absolute;left:968px;top:891px;overflow:visible" width="19" height="19" viewBox="0 0 19 19"><circle cx="9.5" cy="9.5" r="8.3" fill="#1e2224" stroke="#e8e8e8" stroke-width="1.5"/><text x="5" y="14.5" font-family="Liberation Sans" font-weight="bold" font-size="13" fill="#f0f0f0">?</text></svg><div style="position:absolute;left:0.0px;top:916.0px;width:993.0px;height:2.5px;background:#161616"></div><div style="position:absolute;left:0.0px;top:918.5px;width:993.0px;height:16.5px;background:#1a1a1a"></div><div style="position:absolute;left:-3.0px;top:918.8px;width:61.8px;height:16.0px;background:linear-gradient(#2a2a2a,#222222)"></div><div style="position:absolute;left:60.8px;top:918.8px;width:92.1px;height:16.0px;background:linear-gradient(#2a2a2a,#222222)"></div><div style="position:absolute;left:154.9px;top:918.8px;width:92.3px;height:16.0px;background:linear-gradient(#2a2a2a,#222222)"></div><div style="position:absolute;left:249.2px;top:918.8px;width:91.8px;height:16.0px;background:linear-gradient(#2a2a2a,#222222)"></div><div style="position:absolute;left:343.0px;top:918.8px;width:92.2px;height:16.0px;background:linear-gradient(#2a2a2a,#222222)"></div><div style="position:absolute;left:437.2px;top:918.8px;width:91.9px;height:16.0px;background:linear-gradient(#2a2a2a,#222222)"></div><div style="position:absolute;left:531.1px;top:918.8px;width:92.1px;height:16.0px;background:linear-gradient(#2a2a2a,#222222)"></div><div style="position:absolute;left:625.2px;top:918.8px;width:92.0px;height:16.0px;background:linear-gradient(#2a2a2a,#222222)"></div><div style="position:absolute;left:719.2px;top:918.8px;width:257.8px;height:16.0px;background:linear-gradient(#2a2a2a,#222222)"></div><div style="position:absolute;left:978.7px;top:918.8px;width:13.7px;height:16.0px;background:#2c2c2c"></div><div style="position:absolute;left:981.0px;top:923.5px;width:2.0px;height:2.0px;background:#111"></div><div style="position:absolute;left:981.0px;top:927.0px;width:2.0px;height:2.0px;background:#111"></div><div style="position:absolute;left:984.3px;top:923.5px;width:2.0px;height:2.0px;background:#111"></div><div style="position:absolute;left:984.3px;top:927.0px;width:2.0px;height:2.0px;background:#111"></div><div style="position:absolute;left:987.6px;top:923.5px;width:2.0px;height:2.0px;background:#111"></div><div style="position:absolute;left:987.6px;top:927.0px;width:2.0px;height:2.0px;background:#111"></div><div style="position:absolute;left:1.5px;top:916.5px;line-height:20px;font-size:14px;color:#d0d0d0;font-weight:normal;font-family:'Liberation Sans',sans-serif;white-space:nowrap;transform:scaleX(0.9);transform-origin:left center;">ingratio</div><div style="position:absolute;left:63.4px;top:916.5px;line-height:20px;font-size:14px;color:#d0d0d0;font-weight:normal;font-family:'Liberation Sans',sans-serif;white-space:nowrap;transform:scaleX(0.9);transform-origin:left center;">restlength</div><div style="position:absolute;left:157.2px;top:916.5px;line-height:20px;font-size:14px;color:#d0d0d0;font-weight:normal;font-family:'Liberation Sans',sans-serif;white-space:nowrap;transform:scaleX(0.9);transform-origin:left center;">restlengthorig</div><div style="position:absolute;left:251.0px;top:916.5px;line-height:20px;font-size:14px;color:#d0d0d0;font-weight:normal;font-family:'Liberation Sans',sans-serif;white-space:nowrap;transform:scaleX(0.9);transform-origin:left center;">stiffness</div><div style="position:absolute;left:344.8px;top:916.5px;line-height:20px;font-size:14px;color:#d0d0d0;font-weight:normal;font-family:'Liberation Sans',sans-serif;white-space:nowrap;transform:scaleX(0.9);transform-origin:left center;">type</div><div style="position:absolute;left:439.5px;top:916.5px;line-height:20px;font-size:14px;color:#d0d0d0;font-weight:normal;font-family:'Liberation Sans',sans-serif;white-space:nowrap;transform:scaleX(0.9);transform-origin:left center;">group:blue₁</div><div style="position:absolute;left:533.5px;top:916.5px;line-height:20px;font-size:14px;color:#d0d0d0;font-weight:normal;font-family:'Liberation Sans',sans-serif;white-space:nowrap;transform:scaleX(0.9);transform-origin:left center;">group:green₁</div><div style="position:absolute;left:627.5px;top:916.5px;line-height:20px;font-size:14px;color:#d0d0d0;font-weight:normal;font-family:'Liberation Sans',sans-serif;white-space:nowrap;transform:scaleX(0.9);transform-origin:left center;">group:yellow₁</div><div style="position:absolute;left:0.0px;top:935.0px;width:993.0px;height:8.0px;background:#1c1c1c"></div><div style="position:absolute;left:58.8px;top:935.0px;width:2.0px;height:8.0px;background:#111"></div><div style="position:absolute;left:152.9px;top:935.0px;width:2.0px;height:8.0px;background:#111"></div><div style="position:absolute;left:247.2px;top:935.0px;width:2.0px;height:8.0px;background:#111"></div><div style="position:absolute;left:341.0px;top:935.0px;width:2.0px;height:8.0px;background:#111"></div><div style="position:absolute;left:435.2px;top:935.0px;width:2.0px;height:8.0px;background:#111"></div><div style="position:absolute;left:529.1px;top:935.0px;width:2.0px;height:8.0px;background:#111"></div><div style="position:absolute;left:623.2px;top:935.0px;width:2.0px;height:8.0px;background:#111"></div><div style="position:absolute;left:717.2px;top:935.0px;width:2.0px;height:8.0px;background:#111"></div><div style="position:absolute;left:977.0px;top:935.0px;width:2.0px;height:8.0px;background:#111"></div><div style="position:absolute;left:1.5px;top:936.0px;line-height:20px;font-size:14px;color:#d0d0d0;font-weight:normal;font-family:'Liberation Sans',sans-serif;white-space:nowrap;transform:scaleX(0.864);transform-origin:left center;">1</div><div style="position:absolute;left:63.4px;top:936.0px;line-height:20px;font-size:14px;color:#d0d0d0;font-weight:normal;font-family:'Liberation Sans',sans-serif;white-space:nowrap;transform:scaleX(0.864);transform-origin:left center;">0.000500</div><div style="position:absolute;left:157.2px;top:936.0px;line-height:20px;font-size:14px;color:#d0d0d0;font-weight:normal;font-family:'Liberation Sans',sans-serif;white-space:nowrap;transform:scaleX(0.864);transform-origin:left center;">0.000500</div><div style="position:absolute;left:251.0px;top:936.0px;line-height:20px;font-size:14px;color:#d0d0d0;font-weight:normal;font-family:'Liberation Sans',sans-serif;white-space:nowrap;transform:scaleX(0.864);transform-origin:left center;">0.00000e+10</div><div style="position:absolute;left:344.8px;top:936.0px;line-height:20px;font-size:14px;color:#d0d0d0;font-weight:normal;font-family:'Liberation Sans',sans-serif;white-space:nowrap;transform:scaleX(0.864);transform-origin:left center;">stitch</div><div style="position:absolute;left:439.5px;top:936.0px;line-height:20px;font-size:14px;color:#d0d0d0;font-weight:normal;font-family:'Liberation Sans',sans-serif;white-space:nowrap;transform:scaleX(0.864);transform-origin:left center;">0</div><div style="position:absolute;left:533.5px;top:936.0px;line-height:20px;font-size:14px;color:#d0d0d0;font-weight:normal;font-family:'Liberation Sans',sans-serif;white-space:nowrap;transform:scaleX(0.864);transform-origin:left center;">0</div><div style="position:absolute;left:627.5px;top:936.0px;line-height:20px;font-size:14px;color:#d0d0d0;font-weight:normal;font-family:'Liberation Sans',sans-serif;white-space:nowrap;transform:scaleX(0.864);transform-origin:left center;">0</div><div style="position:absolute;left:1000px;top:0px;width:472px;height:943px;background:#212121"></div><div style="position:absolute;left:1472px;top:0px;width:1px;height:943px;background:#000"></div><div style="position:absolute;left:1473px;top:0px;width:6px;height:943px;background:#3e3e3e;border-left:1px solid #474747"></div><div style="position:absolute;left:1479px;top:0px;width:1.5px;height:943px;background:#272727"></div><div style="position:absolute;right:715.0px;top:1.0px;line-height:32px;font-size:26px;color:#474747;font-weight:bold;font-family:'Liberation Sans',sans-serif;white-space:nowrap;transform:scaleX(1.0);transform-origin:right center;">Geometry</div><svg style="position:absolute;left:0;top:0;overflow:visible" width="1" height="1"><path d="M1102.3 210 L1102.3 250" stroke="#5a8acc" stroke-width="1.1" fill="none"/></svg><svg style="position:absolute;left:0;top:0;overflow:visible" width="1" height="1"><path d="M1232.8 210 L1232.8 243" stroke="#5a8acc" stroke-width="1.1" fill="none"/></svg><svg style="position:absolute;left:0;top:0;overflow:visible" width="1" height="1"><path d="M1369 210 L1369 243" stroke="#5a8acc" stroke-width="1.1" fill="none"/></svg><svg style="position:absolute;left:0;top:0;overflow:visible" width="1" height="1"><path d="M1102.3 278 L1089.7 322" stroke="#5a8acc" stroke-width="1.1" fill="none"/></svg><svg style="position:absolute;left:0;top:0;overflow:visible" width="1" height="1"><path d="M1232.8 271 L1220.5 322" stroke="#5a8acc" stroke-width="1.1" fill="none"/></svg><svg style="position:absolute;left:0;top:0;overflow:visible" width="1" height="1"><path d="M1369 271 L1356.5 311.5" stroke="#5a8acc" stroke-width="1.1" fill="none"/></svg><svg style="position:absolute;left:0;top:0;overflow:visible" width="1" height="1"><path d="M1102.3 350.5 C1104 380 1180 390 1204 416" stroke="#5a8acc" stroke-width="1.1" fill="none"/></svg><svg style="position:absolute;left:0;top:0;overflow:visible" width="1" height="1"><path d="M1232.8 350.5 L1219 416" stroke="#5a8acc" stroke-width="1.1" fill="none"/></svg><svg style="position:absolute;left:0;top:0;overflow:visible" width="1" height="1"><path d="M1369 340 C1369 370 1250 385 1233 416" stroke="#5a8acc" stroke-width="1.1" fill="none"/></svg><svg style="position:absolute;left:0;top:0;overflow:visible" width="1" height="1"><path d="M1218.4 452.6 L1204 566" stroke="#a8c080" stroke-width="1.2" fill="none"/></svg><svg style="position:absolute;left:0;top:0;overflow:visible" width="1" height="1"><path d="M1218 594 L1218 781" stroke="#b8c898" stroke-width="1.2" fill="none"/></svg><div style="position:absolute;left:1071.8px;top:186.5px;width:61.5px;height:19.0px;background:#4a8fe0;border-radius:3.5px"></div><svg style="position:absolute;left:1071.8px;top:186.5px;overflow:visible" width="61.5" height="19" viewBox="0 0 61.5 19"><path d="M10.2 2 L8.0 17.0" stroke="#2c5a9a" stroke-width="1"/><path d="M18.2 2 L16.0 17.0" stroke="#2c5a9a" stroke-width="1"/><path d="M46.2 2 L44.0 17.0" stroke="#2c5a9a" stroke-width="1"/><path d="M54.2 2 L52.0 17.0" stroke="#2c5a9a" stroke-width="1"/></svg><svg style="position:absolute;left:1095.5px;top:192px;overflow:visible" width="14" height="8" viewBox="0 0 14 8"><path d="M3 1 L11 1 L13.5 6.5 L0.5 6.5 Z" fill="#e8e8e8" stroke="#888" stroke-width="0.6"/></svg><div style="position:absolute;left:1099.5px;top:207.4px;width:6.0px;height:6.0px;background:#c4c4c4;border-radius:50%"></div><div style="position:absolute;left:1139.3px;top:185.7px;line-height:19px;font-size:13px;color:#d4d4d4;font-weight:normal;font-family:'Liberation Sans',sans-serif;white-space:nowrap;transform:scaleX(0.99);transform-origin:left center;">grid1</div><div style="position:absolute;left:1201.9px;top:186.5px;width:61.5px;height:19.0px;background:#5ec22c;border-radius:3.5px"></div><svg style="position:absolute;left:1201.9px;top:186.5px;overflow:visible" width="61.5" height="19" viewBox="0 0 61.5 19"><path d="M10.2 2 L8.0 17.0" stroke="#3a8a18" stroke-width="1"/><path d="M18.2 2 L16.0 17.0" stroke="#3a8a18" stroke-width="1"/><path d="M46.2 2 L44.0 17.0" stroke="#3a8a18" stroke-width="1"/><path d="M54.2 2 L52.0 17.0" stroke="#3a8a18" stroke-width="1"/></svg><svg style="position:absolute;left:1225.6000000000001px;top:192px;overflow:visible" width="14" height="8" viewBox="0 0 14 8"><path d="M3 1 L11 1 L13.5 6.5 L0.5 6.5 Z" fill="#e8e8e8" stroke="#888" stroke-width="0.6"/></svg><div style="position:absolute;left:1229.6px;top:207.4px;width:6.0px;height:6.0px;background:#c4c4c4;border-radius:50%"></div><div style="position:absolute;left:1269.4px;top:185.7px;line-height:19px;font-size:13px;color:#d4d4d4;font-weight:normal;font-family:'Liberation Sans',sans-serif;white-space:nowrap;transform:scaleX(0.99);transform-origin:left center;">grid2</div><div style="position:absolute;left:1338.0px;top:186.5px;width:61.5px;height:19.0px;background:#f2c040;border-radius:3.5px"></div><svg style="position:absolute;left:1338px;top:186.5px;overflow:visible" width="61.5" height="19" viewBox="0 0 61.5 19"><path d="M10.2 2 L8.0 17.0" stroke="#a88a20" stroke-width="1"/><path d="M18.2 2 L16.0 17.0" stroke="#a88a20" stroke-width="1"/><path d="M46.2 2 L44.0 17.0" stroke="#a88a20" stroke-width="1"/><path d="M54.2 2 L52.0 17.0" stroke="#a88a20" stroke-width="1"/></svg><svg style="position:absolute;left:1361.7px;top:192px;overflow:visible" width="14" height="8" viewBox="0 0 14 8"><path d="M3 1 L11 1 L13.5 6.5 L0.5 6.5 Z" fill="#e8e8e8" stroke="#888" stroke-width="0.6"/></svg><div style="position:absolute;left:1365.7px;top:207.4px;width:6.0px;height:6.0px;background:#c4c4c4;border-radius:50%"></div><div style="position:absolute;left:1405.5px;top:185.7px;line-height:19px;font-size:13px;color:#d4d4d4;font-weight:normal;font-family:'Liberation Sans',sans-serif;white-space:nowrap;transform:scaleX(0.99);transform-origin:left center;">grid3</div><div style="position:absolute;left:1099.5px;top:246.6px;width:6.0px;height:6.0px;background:#c4c4c4;border-radius:50%"></div><div style="position:absolute;left:1071.8px;top:254.0px;width:61.5px;height:19.5px;background:#d2d2d2;border-radius:3.5px"></div><svg style="position:absolute;left:1071.8px;top:254px;overflow:visible" width="61.5" height="19.5" viewBox="0 0 61.5 19.5"><path d="M10.2 2 L8.0 17.5" stroke="#7a7a7a" stroke-width="1"/><path d="M18.2 2 L16.0 17.5" stroke="#7a7a7a" stroke-width="1"/><path d="M46.2 2 L44.0 17.5" stroke="#7a7a7a" stroke-width="1"/><path d="M54.2 2 L52.0 17.5" stroke="#7a7a7a" stroke-width="1"/></svg><svg style="position:absolute;left:1095.5px;top:256px;overflow:visible" width="14" height="15" viewBox="0 0 14 15"><g transform="rotate(-45 7 7.5)"><rect x="4" y="1" width="6.5" height="13" rx="1.5" fill="#e8ecf0" stroke="#8a9aa8" stroke-width="0.7"/><rect x="4.3" y="1.5" width="5.9" height="5" fill="#3a70b8"/><rect x="5" y="9" width="4" height="3.5" fill="#b8c4cc"/></g></svg><div style="position:absolute;left:1099.5px;top:275.4px;width:6.0px;height:6.0px;background:#c4c4c4;border-radius:50%"></div><div style="position:absolute;left:1139.3px;top:253.2px;line-height:19px;font-size:13px;color:#d4d4d4;font-weight:normal;font-family:'Liberation Sans',sans-serif;white-space:nowrap;transform:scaleX(0.99);transform-origin:left center;">color1</div><svg style="position:absolute;left:1143px;top:273px;overflow:visible" width="8" height="9" viewBox="0 0 8 9"><path d="M2 4 V2.8 A2 2 0 0 1 6 2.8 V4" stroke="#6b7474" stroke-width="1.3" fill="none"/><rect x="0.5" y="4" width="7" height="5" fill="#6b7474"/></svg><div style="position:absolute;left:1229.6px;top:240.4px;width:6.0px;height:6.0px;background:#c4c4c4;border-radius:50%"></div><div style="position:absolute;left:1201.9px;top:247.8px;width:61.5px;height:19.5px;background:#d2d2d2;border-radius:3.5px"></div><svg style="position:absolute;left:1201.9px;top:247.8px;overflow:visible" width="61.5" height="19.5" viewBox="0 0 61.5 19.5"><path d="M10.2 2 L8.0 17.5" stroke="#7a7a7a" stroke-width="1"/><path d="M18.2 2 L16.0 17.5" stroke="#7a7a7a" stroke-width="1"/><path d="M46.2 2 L44.0 17.5" stroke="#7a7a7a" stroke-width="1"/><path d="M54.2 2 L52.0 17.5" stroke="#7a7a7a" stroke-width="1"/></svg><svg style="position:absolute;left:1225.6000000000001px;top:249.8px;overflow:visible" width="14" height="15" viewBox="0 0 14 15"><g transform="rotate(-45 7 7.5)"><rect x="4" y="1" width="6.5" height="13" rx="1.5" fill="#e8ecf0" stroke="#8a9aa8" stroke-width="0.7"/><rect x="4.3" y="1.5" width="5.9" height="5" fill="#3a70b8"/><rect x="5" y="9" width="4" height="3.5" fill="#b8c4cc"/></g></svg><div style="position:absolute;left:1229.6px;top:269.2px;width:6.0px;height:6.0px;background:#c4c4c4;border-radius:50%"></div><div style="position:absolute;left:1269.4px;top:247.0px;line-height:19px;font-size:13px;color:#d4d4d4;font-weight:normal;font-family:'Liberation Sans',sans-serif;white-space:nowrap;transform:scaleX(0.99);transform-origin:left center;">color2</div><svg style="position:absolute;left:1273px;top:266.5px;overflow:visible" width="8" height="9" viewBox="0 0 8 9"><path d="M2 4 V2.8 A2 2 0 0 1 6 2.8 V4" stroke="#6b7474" stroke-width="1.3" fill="none"/><rect x="0.5" y="4" width="7" height="5" fill="#6b7474"/></svg><div style="position:absolute;left:1365.7px;top:240.4px;width:6.0px;height:6.0px;background:#c4c4c4;border-radius:50%"></div><div style="position:absolute;left:1338.0px;top:247.8px;width:61.5px;height:19.5px;background:#d2d2d2;border-radius:3.5px"></div><svg style="position:absolute;left:1338px;top:247.8px;overflow:visible" width="61.5" height="19.5" viewBox="0 0 61.5 19.5"><path d="M10.2 2 L8.0 17.5" stroke="#7a7a7a" stroke-width="1"/><path d="M18.2 2 L16.0 17.5" stroke="#7a7a7a" stroke-width="1"/><path d="M46.2 2 L44.0 17.5" stroke="#7a7a7a" stroke-width="1"/><path d="M54.2 2 L52.0 17.5" stroke="#7a7a7a" stroke-width="1"/></svg><svg style="position:absolute;left:1361.7px;top:249.8px;overflow:visible" width="14" height="15" viewBox="0 0 14 15"><g transform="rotate(-45 7 7.5)"><rect x="4" y="1" width="6.5" height="13" rx="1.5" fill="#e8ecf0" stroke="#8a9aa8" stroke-width="0.7"/><rect x="4.3" y="1.5" width="5.9" height="5" fill="#3a70b8"/><rect x="5" y="9" width="4" height="3.5" fill="#b8c4cc"/></g></svg><div style="position:absolute;left:1365.7px;top:269.2px;width:6.0px;height:6.0px;background:#c4c4c4;border-radius:50%"></div><div style="position:absolute;left:1405.5px;top:247.0px;line-height:19px;font-size:13px;color:#d4d4d4;font-weight:normal;font-family:'Liberation Sans',sans-serif;white-space:nowrap;transform:scaleX(0.99);transform-origin:left center;">color3</div><svg style="position:absolute;left:1409px;top:266.5px;overflow:visible" width="8" height="9" viewBox="0 0 8 9"><path d="M2 4 V2.8 A2 2 0 0 1 6 2.8 V4" stroke="#6b7474" stroke-width="1.3" fill="none"/><rect x="0.5" y="4" width="7" height="5" fill="#6b7474"/></svg><div style="position:absolute;left:1086.7px;top:319.0px;width:6.0px;height:6.0px;background:#c4c4c4;border-radius:50%"></div><div style="position:absolute;left:1111.6px;top:319.0px;width:6.0px;height:6.0px;background:#c4c4c4;border-radius:50%"></div><div style="position:absolute;left:1071.8px;top:326.5px;width:61.5px;height:19.5px;background:#d2d2d2;border-radius:3.5px"></div><svg style="position:absolute;left:1071.8px;top:326.5px;overflow:visible" width="61.5" height="19.5" viewBox="0 0 61.5 19.5"><path d="M10.2 2 L8.0 17.5" stroke="#7a7a7a" stroke-width="1"/><path d="M18.2 2 L16.0 17.5" stroke="#7a7a7a" stroke-width="1"/><path d="M46.2 2 L44.0 17.5" stroke="#7a7a7a" stroke-width="1"/><path d="M54.2 2 L52.0 17.5" stroke="#7a7a7a" stroke-width="1"/></svg><div style="position:absolute;left:1095.5px;top:329.0px;width:14.0px;height:14.0px;background:#fffdf5;border:1.6px solid #e8a040;border-radius:50%"></div><div style="position:absolute;left:1099.5px;top:347.5px;width:6.0px;height:6.0px;background:#c4c4c4;border-radius:50%"></div><div style="position:absolute;left:1139.3px;top:312.3px;line-height:18px;font-size:12px;color:#7c7c7c;font-weight:normal;font-family:'Liberation Sans',sans-serif;white-space:nowrap;transform:scaleX(0.9);transform-origin:left center;">Group Create</div><div style="position:absolute;left:1139.3px;top:326.2px;line-height:19px;font-size:13px;color:#e0e0e0;font-weight:normal;font-family:'Liberation Sans',sans-serif;white-space:nowrap;transform:scaleX(1.0);transform-origin:left center;">blue</div><div style="position:absolute;left:1139.3px;top:347.3px;line-height:18px;font-size:12px;color:#6e9fd8;font-weight:normal;font-family:'Liberation Sans',sans-serif;white-space:nowrap;transform:scaleX(0.8);transform-origin:left center;">$OS</div><div style="position:absolute;left:1216.8px;top:319.0px;width:6.0px;height:6.0px;background:#c4c4c4;border-radius:50%"></div><div style="position:absolute;left:1241.7px;top:319.0px;width:6.0px;height:6.0px;background:#c4c4c4;border-radius:50%"></div><div style="position:absolute;left:1201.9px;top:326.5px;width:61.5px;height:19.5px;background:#d2d2d2;border-radius:3.5px"></div><svg style="position:absolute;left:1201.9px;top:326.5px;overflow:visible" width="61.5" height="19.5" viewBox="0 0 61.5 19.5"><path d="M10.2 2 L8.0 17.5" stroke="#7a7a7a" stroke-width="1"/><path d="M18.2 2 L16.0 17.5" stroke="#7a7a7a" stroke-width="1"/><path d="M46.2 2 L44.0 17.5" stroke="#7a7a7a" stroke-width="1"/><path d="M54.2 2 L52.0 17.5" stroke="#7a7a7a" stroke-width="1"/></svg><div style="position:absolute;left:1225.6px;top:329.0px;width:14.0px;height:14.0px;background:#fffdf5;border:1.6px solid #e8a040;border-radius:50%"></div><div style="position:absolute;left:1229.6px;top:347.5px;width:6.0px;height:6.0px;background:#c4c4c4;border-radius:50%"></div><div style="position:absolute;left:1269.4px;top:312.3px;line-height:18px;font-size:12px;color:#7c7c7c;font-weight:normal;font-family:'Liberation Sans',sans-serif;white-space:nowrap;transform:scaleX(0.9);transform-origin:left center;">Group Create</div><div style="position:absolute;left:1269.4px;top:326.2px;line-height:19px;font-size:13px;color:#e0e0e0;font-weight:normal;font-family:'Liberation Sans',sans-serif;white-space:nowrap;transform:scaleX(1.0);transform-origin:left center;">green</div><div style="position:absolute;left:1269.4px;top:347.3px;line-height:18px;font-size:12px;color:#6e9fd8;font-weight:normal;font-family:'Liberation Sans',sans-serif;white-space:nowrap;transform:scaleX(0.8);transform-origin:left center;">$OS</div><div style="position:absolute;left:1352.9px;top:308.5px;width:6.0px;height:6.0px;background:#c4c4c4;border-radius:50%"></div><div style="position:absolute;left:1377.8px;top:308.5px;width:6.0px;height:6.0px;background:#c4c4c4;border-radius:50%"></div><div style="position:absolute;left:1338.0px;top:316.0px;width:61.5px;height:19.5px;background:#d2d2d2;border-radius:3.5px"></div><svg style="position:absolute;left:1338px;top:316px;overflow:visible" width="61.5" height="19.5" viewBox="0 0 61.5 19.5"><path d="M10.2 2 L8.0 17.5" stroke="#7a7a7a" stroke-width="1"/><path d="M18.2 2 L16.0 17.5" stroke="#7a7a7a" stroke-width="1"/><path d="M46.2 2 L44.0 17.5" stroke="#7a7a7a" stroke-width="1"/><path d="M54.2 2 L52.0 17.5" stroke="#7a7a7a" stroke-width="1"/></svg><div style="position:absolute;left:1361.7px;top:318.5px;width:14.0px;height:14.0px;background:#fffdf5;border:1.6px solid #e8a040;border-radius:50%"></div><div style="position:absolute;left:1365.7px;top:337.0px;width:6.0px;height:6.0px;background:#c4c4c4;border-radius:50%"></div><div style="position:absolute;left:1405.5px;top:301.8px;line-height:18px;font-size:12px;color:#7c7c7c;font-weight:normal;font-family:'Liberation Sans',sans-serif;white-space:nowrap;transform:scaleX(0.9);transform-origin:left center;">Group Create</div><div style="position:absolute;left:1405.5px;top:315.7px;line-height:19px;font-size:13px;color:#e0e0e0;font-weight:normal;font-family:'Liberation Sans',sans-serif;white-space:nowrap;transform:scaleX(1.0);transform-origin:left center;">yellow</div><div style="position:absolute;left:1405.5px;top:336.8px;line-height:18px;font-size:12px;color:#6e9fd8;font-weight:normal;font-family:'Liberation Sans',sans-serif;white-space:nowrap;transform:scaleX(0.8);transform-origin:left center;">$OS</div><div style="position:absolute;left:1193.8px;top:416.0px;width:49.7px;height:9.0px;background:#cfcfcf;border-radius:24px 24px 10px 10px / 8px 8px 3px 3px"></div><div style="position:absolute;left:1187.0px;top:425.5px;width:62.0px;height:21.8px;background:#d2d2d2;border-radius:11px/10px"></div><svg style="position:absolute;left:1187px;top:425.5px;overflow:visible" width="62" height="22" viewBox="0 0 62 22"><path d="M11.0 3 L9.0 19" stroke="#7a7a7a" stroke-width="1"/><path d="M19.0 3 L17.0 19" stroke="#7a7a7a" stroke-width="1"/><path d="M47.0 3 L45.0 19" stroke="#7a7a7a" stroke-width="1"/><path d="M55.0 3 L53.0 19" stroke="#7a7a7a" stroke-width="1"/></svg><svg style="position:absolute;left:1211px;top:427px;overflow:visible" width="14" height="17" viewBox="0 0 14 17"><path d="M3 2 Q9 5 7 8 Q3 11 9 13 L4 16" stroke="#c02020" stroke-width="2.4" fill="none"/><circle cx="3" cy="2.5" r="2" fill="#e8e8ee"/><rect x="6" y="7" width="8" height="3" fill="#eee"/><rect x="1" y="13" width="5" height="3" fill="#eee"/></svg><div style="position:absolute;left:1215.4px;top:449.6px;width:6.0px;height:6.0px;background:#c4c4c4;border-radius:50%"></div><div style="position:absolute;left:1254.6px;top:424.7px;line-height:19px;font-size:13px;color:#d4d4d4;font-weight:normal;font-family:'Liberation Sans',sans-serif;white-space:nowrap;transform:scaleX(0.945);transform-origin:left center;">merge1</div><div style="position:absolute;left:1187.4px;top:549.2px;width:61.2px;height:61.2px;background:#3d6399;border-radius:50%"></div><div style="position:absolute;left:1197.7px;top:559.5px;width:40.6px;height:40.6px;background:#9a7acc;border-radius:50%"></div><div style="position:absolute;left:1198.9px;top:562.8px;width:6.0px;height:6.0px;background:#c4c4c4;border-radius:50%"></div><div style="position:absolute;left:1198.9px;top:591.0px;width:6.0px;height:6.0px;background:#c4c4c4;border-radius:50%"></div><div style="position:absolute;left:1215.2px;top:562.8px;width:6.0px;height:6.0px;background:#e070d8;border-radius:50%"></div><div style="position:absolute;left:1215.2px;top:591.0px;width:6.0px;height:6.0px;background:#e070d8;border-radius:50%"></div><div style="position:absolute;left:1231.5px;top:562.8px;width:6.0px;height:6.0px;background:#c4c4c4;border-radius:50%"></div><div style="position:absolute;left:1231.5px;top:591.0px;width:6.0px;height:6.0px;background:#c4c4c4;border-radius:50%"></div><div style="position:absolute;left:1185.4px;top:568.5px;width:65.2px;height:22.7px;border:2.6px solid #f2d000;border-radius:6px;background:#262626"></div><div style="position:absolute;left:1188.7px;top:571.3px;width:58.5px;height:17.2px;background:#d0d0d0;border-radius:3px"></div><div style="position:absolute;left:1240.0px;top:571.3px;width:7.2px;height:17.2px;background:#18a8ec;border-radius:0 3px 3px 0"></div><svg style="position:absolute;left:1188.7px;top:571.3px;overflow:visible" width="58.5" height="17.2" viewBox="0 0 58.5 17.2"><path d="M9.5 1 L7.5 16" stroke="#6a6a6a" stroke-width="1"/><path d="M18.0 1 L16.0 16" stroke="#6a6a6a" stroke-width="1"/><path d="M45.0 1 L43.0 16" stroke="#6a6a6a" stroke-width="1"/><path d="M53.0 1 L51.0 16" stroke="#6a6a6a" stroke-width="1"/></svg><svg style="position:absolute;left:1211px;top:573px;overflow:visible" width="14" height="14" viewBox="0 0 14 14"><path d="M1 13 L6 8" stroke="#555" stroke-width="1.2"/><circle cx="9" cy="5" r="3.6" fill="#40c8c8"/><path d="M5 7 L8 10" stroke="#30a0a0" stroke-width="3"/></svg><div style="position:absolute;left:1254.5px;top:569.5px;line-height:19px;font-size:13px;color:#d8d8d8;font-weight:normal;font-family:'Liberation Sans',sans-serif;white-space:nowrap;transform:scaleX(1.01);transform-origin:left center;">vellumconstraints3</div><svg style="position:absolute;left:1257.4px;top:589px;overflow:visible" width="8" height="9" viewBox="0 0 8 9"><path d="M2 4 V2.8 A2 2 0 0 1 6 2.8 V4" stroke="#6b7474" stroke-width="1.3" fill="none"/><rect x="0.5" y="4" width="7" height="5" fill="#6b7474"/></svg><div style="position:absolute;left:1254.5px;top:598.7px;line-height:18px;font-size:12px;color:#74a2da;font-weight:normal;font-family:'Liberation Sans',sans-serif;white-space:nowrap;transform:scaleX(0.9);transform-origin:left center;">glue</div><div style="position:absolute;left:1215.0px;top:777.8px;width:6.0px;height:6.0px;background:#c4c4c4;border-radius:50%"></div><div style="position:absolute;left:1215.0px;top:817.0px;width:6.0px;height:6.0px;background:#c4c4c4;border-radius:50%"></div><svg style="position:absolute;left:1196px;top:783.7px;overflow:visible" width="44" height="32.4" viewBox="0 0 44 32.4"><g fill="#9db5cc"><rect x="-2.3" y="9.2" width="48.6" height="14" rx="7" transform="rotate(30 22 16.2)"/><rect x="-2.3" y="9.2" width="48.6" height="14" rx="7" transform="rotate(-30 22 16.2)"/></g><path d="M10 11.5 L15.5 6.5 M28.5 6.5 L34 11.5 M10 21 L15.5 26 M28.5 26 L34 21" stroke="#6a8098" stroke-width="0.8"/><circle cx="22" cy="16.2" r="5.6" fill="#9db5cc" stroke="#e8eef0" stroke-width="1.6" stroke-dasharray="1.6 0.6"/></svg><div style="position:absolute;left:1245.8px;top:789.5px;line-height:19px;font-size:13px;color:#d8d8d8;font-weight:normal;font-family:'Liberation Sans',sans-serif;white-space:nowrap;transform:scaleX(0.98);transform-origin:left center;">null1</div><div style="position:absolute;left:1474.2px;top:496.5px;width:0;height:0;border-top:3.5px solid transparent;border-bottom:3.5px solid transparent;border-right:3.5px solid #777"></div><div style="position:absolute;left:1474.5px;top:520.0px;width:1.0px;height:1.0px;background:#777"></div><div style="position:absolute;left:1477.5px;top:520.0px;width:1.0px;height:1.0px;background:#777"></div><div style="position:absolute;left:1474.5px;top:523.0px;width:1.0px;height:1.0px;background:#777"></div><div style="position:absolute;left:1477.5px;top:523.0px;width:1.0px;height:1.0px;background:#777"></div><div style="position:absolute;left:1474.5px;top:526.0px;width:1.0px;height:1.0px;background:#777"></div><div style="position:absolute;left:1477.5px;top:526.0px;width:1.0px;height:1.0px;background:#777"></div><div style="position:absolute;left:1474.5px;top:529.0px;width:1.0px;height:1.0px;background:#777"></div><div style="position:absolute;left:1477.5px;top:529.0px;width:1.0px;height:1.0px;background:#777"></div><div style="position:absolute;left:1474.5px;top:532.0px;width:1.0px;height:1.0px;background:#777"></div><div style="position:absolute;left:1477.5px;top:532.0px;width:1.0px;height:1.0px;background:#777"></div><div style="position:absolute;left:1474.5px;top:535.0px;width:1.0px;height:1.0px;background:#777"></div><div style="position:absolute;left:1477.5px;top:535.0px;width:1.0px;height:1.0px;background:#777"></div><div style="position:absolute;left:1474.5px;top:538.0px;width:1.0px;height:1.0px;background:#777"></div><div style="position:absolute;left:1477.5px;top:538.0px;width:1.0px;height:1.0px;background:#777"></div><div style="position:absolute;left:1474.5px;top:541.0px;width:1.0px;height:1.0px;background:#777"></div><div style="position:absolute;left:1477.5px;top:541.0px;width:1.0px;height:1.0px;background:#777"></div><div style="position:absolute;left:1474.5px;top:544.0px;width:1.0px;height:1.0px;background:#777"></div><div style="position:absolute;left:1477.5px;top:544.0px;width:1.0px;height:1.0px;background:#777"></div><div style="position:absolute;left:1474.5px;top:547.0px;width:1.0px;height:1.0px;background:#777"></div><div style="position:absolute;left:1477.5px;top:547.0px;width:1.0px;height:1.0px;background:#777"></div><div style="position:absolute;left:1474.5px;top:550.0px;width:1.0px;height:1.0px;background:#777"></div><div style="position:absolute;left:1477.5px;top:550.0px;width:1.0px;height:1.0px;background:#777"></div><div style="position:absolute;left:995.2px;top:496.5px;width:0;height:0;border-top:3.5px solid transparent;border-bottom:3.5px solid transparent;border-right:3.5px solid #777"></div><div style="position:absolute;left:995.5px;top:520.0px;width:1.0px;height:1.0px;background:#777"></div><div style="position:absolute;left:998.5px;top:520.0px;width:1.0px;height:1.0px;background:#777"></div><div style="position:absolute;left:995.5px;top:523.0px;width:1.0px;height:1.0px;background:#777"></div><div style="position:absolute;left:998.5px;top:523.0px;width:1.0px;height:1.0px;background:#777"></div><div style="position:absolute;left:995.5px;top:526.0px;width:1.0px;height:1.0px;background:#777"></div><div style="position:absolute;left:998.5px;top:526.0px;width:1.0px;height:1.0px;background:#777"></div><div style="position:absolute;left:995.5px;top:529.0px;width:1.0px;height:1.0px;background:#777"></div><div style="position:absolute;left:998.5px;top:529.0px;width:1.0px;height:1.0px;background:#777"></div><div style="position:absolute;left:995.5px;top:532.0px;width:1.0px;height:1.0px;background:#777"></div><div style="position:absolute;left:998.5px;top:532.0px;width:1.0px;height:1.0px;background:#777"></div><div style="position:absolute;left:995.5px;top:535.0px;width:1.0px;height:1.0px;background:#777"></div><div style="position:absolute;left:998.5px;top:535.0px;width:1.0px;height:1.0px;background:#777"></div><div style="position:absolute;left:995.5px;top:538.0px;width:1.0px;height:1.0px;background:#777"></div><div style="position:absolute;left:998.5px;top:538.0px;width:1.0px;height:1.0px;background:#777"></div><div style="position:absolute;left:995.5px;top:541.0px;width:1.0px;height:1.0px;background:#777"></div><div style="position:absolute;left:998.5px;top:541.0px;width:1.0px;height:1.0px;background:#777"></div><div style="position:absolute;left:995.5px;top:544.0px;width:1.0px;height:1.0px;background:#777"></div><div style="position:absolute;left:998.5px;top:544.0px;width:1.0px;height:1.0px;background:#777"></div><div style="position:absolute;left:995.5px;top:547.0px;width:1.0px;height:1.0px;background:#777"></div><div style="position:absolute;left:998.5px;top:547.0px;width:1.0px;height:1.0px;background:#777"></div><div style="position:absolute;left:995.5px;top:550.0px;width:1.0px;height:1.0px;background:#777"></div><div style="position:absolute;left:998.5px;top:550.0px;width:1.0px;height:1.0px;background:#777"></div><div style="position:absolute;left:995.2px;top:566.5px;width:0;height:0;border-top:3.5px solid transparent;border-bottom:3.5px solid transparent;border-left:3.5px solid #777"></div><div style="position:absolute;left:1480.5px;top:0px;width:694.5px;height:943px;background:#2b2b2b"></div><div style="position:absolute;left:1480.5px;top:50px;width:694.5px;height:893px;background:#303030"></div><div style="position:absolute;left:1482.5px;top:-6.5px;line-height:19px;font-size:13px;color:#cbcbcb;font-weight:normal;font-family:'Liberation Sans',sans-serif;white-space:nowrap;transform:scaleX(0.91);transform-origin:left center;">Asset Name and Path</div><div style="position:absolute;left:1634.0px;top:-11.0px;width:184.5px;height:23.5px;background:linear-gradient(#484848,#353535);border:1px solid #1a1a1a;border-radius:2px;box-shadow:0 1px 0 #202020"></div><div style="position:absolute;left:1796.0px;top:-10.0px;width:21.5px;height:21.5px;background:linear-gradient(#2b2b2b,#232323)"></div><div style="position:absolute;left:1803.2px;top:-5.8px;width:0;height:0;border-left:4px solid transparent;border-right:4px solid transparent;border-bottom:5.5px solid #b0b0b0"></div><div style="position:absolute;left:1803.2px;top:1.8px;width:0;height:0;border-left:4px solid transparent;border-right:4px solid transparent;border-top:5.5px solid #b0b0b0"></div><div style="position:absolute;left:1650.0px;top:-9.8px;line-height:20px;font-size:14px;color:#d8d8d8;font-weight:normal;font-family:'Liberation Sans',sans-serif;white-space:nowrap;transform:scaleX(0.864);transform-origin:left center;">vellumconstraints</div><div style="position:absolute;left:1830.0px;top:-11.0px;width:345.0px;height:23.5px;background:#333;border:1px solid #1c1c1c"></div><div style="position:absolute;left:1846.0px;top:-7.5px;line-height:20px;font-size:14px;color:#d0d0d0;font-weight:normal;font-family:'Liberation Sans',sans-serif;white-space:nowrap;transform:scaleX(0.875);transform-origin:left center;">C:/PROGRA~1/SIDEEF~1/HOUDIN~1.455/houdini/otls/OPlib3</div><div style="position:absolute;left:1482.0px;top:15.0px;width:693.0px;height:1.0px;background:#3e3e3e"></div><div style="position:absolute;right:540.5px;top:23.9px;line-height:20px;font-size:14px;color:#cbcbcb;font-weight:normal;font-family:'Liberation Sans',sans-serif;white-space:nowrap;transform:scaleX(0.864);transform-origin:right center;">Constraint Type</div><div style="position:absolute;left:1649.5px;top:22.0px;width:169.8px;height:23.5px;background:linear-gradient(#484848,#353535);border:1px solid #1a1a1a;border-radius:2px;box-shadow:0 1px 0 #202020"></div><div style="position:absolute;left:1796.7px;top:23.0px;width:21.6px;height:21.5px;background:linear-gradient(#2b2b2b,#232323)"></div><div style="position:absolute;left:1804.0px;top:27.2px;width:0;height:0;border-left:4px solid transparent;border-right:4px solid transparent;border-bottom:5.5px solid #b0b0b0"></div><div style="position:absolute;left:1804.0px;top:34.8px;width:0;height:0;border-left:4px solid transparent;border-right:4px solid transparent;border-top:5.5px solid #b0b0b0"></div><div style="position:absolute;left:1665.0px;top:23.2px;line-height:20px;font-size:14px;color:#d8d8d8;font-weight:bold;font-family:'Liberation Sans',sans-serif;white-space:nowrap;transform:scaleX(0.864);transform-origin:left center;">Glue</div><div style="position:absolute;left:1482.0px;top:50.0px;width:693.0px;height:25.5px;background:#444444"></div><div style="position:absolute;left:1503.0px;top:51.5px;line-height:20px;font-size:14px;color:#dcdcdc;font-weight:normal;font-family:'Liberation Sans',sans-serif;white-space:nowrap;transform:scaleX(0.864);transform-origin:left center;">Geometry</div><div style="position:absolute;right:540.5px;top:84.4px;line-height:20px;font-size:14px;color:#cbcbcb;font-weight:normal;font-family:'Liberation Sans',sans-serif;white-space:nowrap;transform:scaleX(0.864);transform-origin:right center;">Group Type</div><div style="position:absolute;left:1649.5px;top:82.8px;width:104.9px;height:23.5px;background:linear-gradient(#484848,#353535);border:1px solid #1a1a1a;border-radius:2px;box-shadow:0 1px 0 #202020"></div><div style="position:absolute;left:1732.0px;top:83.8px;width:21.4px;height:21.5px;background:linear-gradient(#2b2b2b,#232323)"></div><div style="position:absolute;left:1739.2px;top:88.0px;width:0;height:0;border-left:4px solid transparent;border-right:4px solid transparent;border-bottom:5.5px solid #b0b0b0"></div><div style="position:absolute;left:1739.2px;top:95.5px;width:0;height:0;border-left:4px solid transparent;border-right:4px solid transparent;border-top:5.5px solid #b0b0b0"></div><div style="position:absolute;left:1665.0px;top:84.0px;line-height:20px;font-size:14px;color:#d8d8d8;font-weight:normal;font-family:'Liberation Sans',sans-serif;white-space:nowrap;transform:scaleX(0.864);transform-origin:left center;">Primitives</div><div style="position:absolute;right:540.5px;top:113.9px;line-height:20px;font-size:14px;color:#cbcbcb;font-weight:normal;font-family:'Liberation Sans',sans-serif;white-space:nowrap;transform:scaleX(0.864);transform-origin:right center;">Group</div><div style="position:absolute;left:1649.5px;top:113.0px;width:525.5px;height:22.7px;background:#000;border-top:1px solid #1c1c1c;border-left:1px solid #1c1c1c"></div><div style="position:absolute;left:1498.0px;top:148.0px;width:677.0px;height:1.0px;background:#3d3d3d"></div><div style="position:absolute;right:540.5px;top:162.4px;line-height:20px;font-size:14px;color:#cbcbcb;font-weight:normal;font-family:'Liberation Sans',sans-serif;white-space:nowrap;transform:scaleX(0.864);transform-origin:right center;">Mass</div><div style="position:absolute;left:1649.7px;top:160.3px;width:148.9px;height:24.2px;background:linear-gradient(#484848,#353535);border:1px solid #1a1a1a;border-radius:2px;box-shadow:0 1px 0 #202020"></div><div style="position:absolute;left:1776.0px;top:161.3px;width:21.6px;height:22.2px;background:linear-gradient(#2b2b2b,#232323)"></div><div style="position:absolute;left:1783.3px;top:165.9px;width:0;height:0;border-left:4px solid transparent;border-right:4px solid transparent;border-bottom:5.5px solid #b0b0b0"></div><div style="position:absolute;left:1783.3px;top:173.4px;width:0;height:0;border-left:4px solid transparent;border-right:4px solid transparent;border-top:5.5px solid #b0b0b0"></div><div style="position:absolute;left:1665.2px;top:161.9px;line-height:20px;font-size:14px;color:#d8d8d8;font-weight:normal;font-family:'Liberation Sans',sans-serif;white-space:nowrap;transform:scaleX(0.864);transform-origin:left center;">Unchanged</div><div style="position:absolute;left:1800.0px;top:161.7px;width:81.8px;height:23.8px;background:#262626;border-top:1px solid #222"></div><div style="position:absolute;left:1804.0px;top:164.1px;line-height:19px;font-size:13px;color:#5c5c5c;font-weight:normal;font-family:'Liberation Mono',monospace;white-space:nowrap;transform:scaleX(1.0);transform-origin:left center;">0.1</div><div style="position:absolute;left:1890.0px;top:171.0px;width:285.0px;height:5.0px;background:#282828;border-radius:2.5px"></div><div style="position:absolute;left:1888.5px;top:163.0px;width:6.0px;height:21.0px;background:#444;border:1px solid #2c2c2c;border-radius:1.5px"></div><div style="position:absolute;right:540.5px;top:191.4px;line-height:20px;font-size:14px;color:#cbcbcb;font-weight:normal;font-family:'Liberation Sans',sans-serif;white-space:nowrap;transform:scaleX(0.864);transform-origin:right center;">Thickness</div><div style="position:absolute;left:1649.7px;top:189.7px;width:148.9px;height:23.8px;background:linear-gradient(#484848,#353535);border:1px solid #1a1a1a;border-radius:2px;box-shadow:0 1px 0 #202020"></div><div style="position:absolute;left:1776.0px;top:190.7px;width:21.6px;height:21.8px;background:linear-gradient(#2b2b2b,#232323)"></div><div style="position:absolute;left:1783.3px;top:195.1px;width:0;height:0;border-left:4px solid transparent;border-right:4px solid transparent;border-bottom:5.5px solid #b0b0b0"></div><div style="position:absolute;left:1783.3px;top:202.6px;width:0;height:0;border-left:4px solid transparent;border-right:4px solid transparent;border-top:5.5px solid #b0b0b0"></div><div style="position:absolute;left:1665.2px;top:191.1px;line-height:20px;font-size:14px;color:#d8d8d8;font-weight:normal;font-family:'Liberation Sans',sans-serif;white-space:nowrap;transform:scaleX(0.864);transform-origin:left center;">Unchanged</div><div style="position:absolute;left:1800.0px;top:190.5px;width:81.8px;height:23.5px;background:#262626;border-top:1px solid #222"></div><div style="position:absolute;left:1804.0px;top:192.8px;line-height:19px;font-size:13px;color:#5c5c5c;font-weight:normal;font-family:'Liberation Mono',monospace;white-space:nowrap;transform:scaleX(1.0);transform-origin:left center;">0.01</div><div style="position:absolute;left:1886.0px;top:199.5px;width:289.0px;height:5.0px;background:#282828;border-radius:2.5px"></div><div style="position:absolute;left:1884.5px;top:192.0px;width:6.0px;height:21.0px;background:#444;border:1px solid #2c2c2c;border-radius:1.5px"></div><div style="position:absolute;left:1498.0px;top:227.5px;width:677.0px;height:1.0px;background:#3d3d3d"></div><div style="position:absolute;right:540.5px;top:241.4px;line-height:20px;font-size:14px;color:#cbcbcb;font-weight:normal;font-family:'Liberation Sans',sans-serif;white-space:nowrap;transform:scaleX(0.864);transform-origin:right center;">Define Pieces</div><div style="position:absolute;left:1649.7px;top:239.7px;width:151.0px;height:23.8px;background:linear-gradient(#484848,#353535);border:1px solid #1a1a1a;border-radius:2px;box-shadow:0 1px 0 #202020"></div><div style="position:absolute;left:1778.0px;top:240.7px;width:21.7px;height:21.8px;background:linear-gradient(#2b2b2b,#232323)"></div><div style="position:absolute;left:1785.3px;top:245.1px;width:0;height:0;border-left:4px solid transparent;border-right:4px solid transparent;border-bottom:5.5px solid #b0b0b0"></div><div style="position:absolute;left:1785.3px;top:252.6px;width:0;height:0;border-left:4px solid transparent;border-right:4px solid transparent;border-top:5.5px solid #b0b0b0"></div><div style="position:absolute;left:1665.2px;top:241.1px;line-height:20px;font-size:14px;color:#d8d8d8;font-weight:normal;font-family:'Liberation Sans',sans-serif;white-space:nowrap;transform:scaleX(0.864);transform-origin:left center;">From Connectivity</div><div style="position:absolute;left:1650.0px;top:271.4px;width:15.0px;height:14.5px;background:#000;border:1px solid #1e1e1e"></div><svg style="position:absolute;left:1651px;top:270.4px" width="14" height="15"><path d="M2 8 L5.5 12.5 L12 2.5 L6 9.5 Z" fill="#ffffff" stroke="#ffffff" stroke-width="1.6" stroke-linejoin="round"/></svg><div style="position:absolute;left:1674.5px;top:267.0px;line-height:20px;font-size:14px;color:#cbcbcb;font-weight:normal;font-family:'Liberation Sans',sans-serif;white-space:nowrap;transform:scaleX(0.864);transform-origin:left center;">Show Guide Geometry</div><div style="position:absolute;left:1482.0px;top:296.2px;width:693.0px;height:25.5px;background:#444444"></div><div style="position:absolute;left:1503.0px;top:297.8px;line-height:20px;font-size:14px;color:#dcdcdc;font-weight:bold;font-family:'Liberation Sans',sans-serif;white-space:nowrap;transform:scaleX(0.87);transform-origin:left center;">Target Geometry</div><div style="position:absolute;right:540.5px;top:330.4px;line-height:20px;font-size:14px;color:#cbcbcb;font-weight:normal;font-family:'Liberation Sans',sans-serif;white-space:nowrap;transform:scaleX(0.864);transform-origin:right center;">Target Group Type</div><div style="position:absolute;left:1649.7px;top:328.7px;width:105.1px;height:23.8px;background:linear-gradient(#484848,#353535);border:1px solid #1a1a1a;border-radius:2px;box-shadow:0 1px 0 #202020"></div><div style="position:absolute;left:1732.0px;top:329.7px;width:21.8px;height:21.8px;background:linear-gradient(#2b2b2b,#232323)"></div><div style="position:absolute;left:1739.4px;top:334.1px;width:0;height:0;border-left:4px solid transparent;border-right:4px solid transparent;border-bottom:5.5px solid #b0b0b0"></div><div style="position:absolute;left:1739.4px;top:341.6px;width:0;height:0;border-left:4px solid transparent;border-right:4px solid transparent;border-top:5.5px solid #b0b0b0"></div><div style="position:absolute;left:1665.2px;top:330.1px;line-height:20px;font-size:14px;color:#d8d8d8;font-weight:normal;font-family:'Liberation Sans',sans-serif;white-space:nowrap;transform:scaleX(0.864);transform-origin:left center;">Primitives</div><div style="position:absolute;right:540.5px;top:359.4px;line-height:20px;font-size:14px;color:#cbcbcb;font-weight:normal;font-family:'Liberation Sans',sans-serif;white-space:nowrap;transform:scaleX(0.864);transform-origin:right center;">Target Group</div><div style="position:absolute;left:1649.7px;top:358.7px;width:525.3px;height:22.8px;background:#000;border-top:1px solid #1c1c1c;border-left:1px solid #1c1c1c"></div><div style="position:absolute;left:1653.7px;top:360.6px;line-height:19px;font-size:13px;color:#f0f0f0;font-weight:bold;font-family:'Liberation Mono',monospace;white-space:nowrap;transform:scaleX(1.0);transform-origin:left center;">green</div><div style="position:absolute;left:1482.0px;top:391.0px;width:693.0px;height:25.6px;background:#444444"></div><div style="position:absolute;left:1503.0px;top:392.6px;line-height:20px;font-size:14px;color:#dcdcdc;font-weight:bold;font-family:'Liberation Sans',sans-serif;white-space:nowrap;transform:scaleX(0.87);transform-origin:left center;">Glue Search</div><div style="position:absolute;left:1501.0px;top:428.0px;width:15.0px;height:14.5px;background:#000;border:1px solid #1e1e1e"></div><div style="position:absolute;right:540.5px;top:423.9px;line-height:20px;font-size:14px;color:#868686;font-weight:normal;font-family:'Liberation Sans',sans-serif;white-space:nowrap;transform:scaleX(0.864);transform-origin:right center;">Cluster Attrib</div><div style="position:absolute;left:1649.7px;top:423.0px;width:525.3px;height:23.2px;background:#262626;border-top:1px solid #222"></div><div style="position:absolute;left:1653.7px;top:425.1px;line-height:19px;font-size:13px;color:#5c5c5c;font-weight:normal;font-family:'Liberation Mono',monospace;white-space:nowrap;transform:scaleX(1.0);transform-origin:left center;">cluster</div><div style="position:absolute;right:540.5px;top:449.9px;line-height:20px;font-size:14px;color:#cbcbcb;font-weight:normal;font-family:'Liberation Sans',sans-serif;white-space:nowrap;transform:scaleX(0.864);transform-origin:right center;">Min Search Dist</div><div style="position:absolute;left:1649.7px;top:449.7px;width:81.1px;height:22.3px;background:#000;border-top:1px solid #1c1c1c;border-left:1px solid #1c1c1c"></div><div style="position:absolute;left:1653.7px;top:451.4px;line-height:19px;font-size:13px;color:#f0f0f0;font-weight:normal;font-family:'Liberation Mono',monospace;white-space:nowrap;transform:scaleX(1.0);transform-origin:left center;">0</div><div style="position:absolute;right:540.5px;top:475.9px;line-height:20px;font-size:14px;color:#cbcbcb;font-weight:normal;font-family:'Liberation Sans',sans-serif;white-space:nowrap;transform:scaleX(0.864);transform-origin:right center;">Max Search Dist</div><div style="position:absolute;left:1649.7px;top:476.0px;width:81.1px;height:22.4px;background:#000;border-top:1px solid #1c1c1c;border-left:1px solid #1c1c1c"></div><div style="position:absolute;left:1653.7px;top:477.7px;line-height:19px;font-size:13px;color:#f0f0f0;font-weight:bold;font-family:'Liberation Mono',monospace;white-space:nowrap;transform:scaleX(1.0);transform-origin:left center;">1</div><div style="position:absolute;right:540.5px;top:501.9px;line-height:20px;font-size:14px;color:#cbcbcb;font-weight:normal;font-family:'Liberation Sans',sans-serif;white-space:nowrap;transform:scaleX(0.864);transform-origin:right center;">Max Search Points</div><div style="position:absolute;left:1649.7px;top:501.7px;width:81.1px;height:22.7px;background:#000;border-top:1px solid #1c1c1c;border-left:1px solid #1c1c1c"></div><div style="position:absolute;left:1653.7px;top:503.5px;line-height:19px;font-size:13px;color:#f0f0f0;font-weight:normal;font-family:'Liberation Mono',monospace;white-space:nowrap;transform:scaleX(1.0);transform-origin:left center;">10</div><div style="position:absolute;left:1739.0px;top:458.0px;width:436.0px;height:5.0px;background:#000;border-radius:2.5px"></div><div style="position:absolute;left:1733.9px;top:449.9px;width:5.5px;height:21.4px;background:linear-gradient(90deg,#dcdcdc 0,#b8b8b8 30%,#8a8a8a 70%,#5a5a5a);border-radius:1.5px;box-shadow:0 0 0 0.6px #1a1a1a"></div><div style="position:absolute;left:1735.0px;top:484.1px;width:440.0px;height:5.0px;background:#1f4d9e;border:1px solid #050505;border-radius:2.5px"></div><div style="position:absolute;left:1735.0px;top:510.2px;width:440.0px;height:5.0px;background:#1f4d9e;border:1px solid #050505;border-radius:2.5px"></div><div style="position:absolute;left:1792.0px;top:515.5px;width:1.0px;height:2.0px;background:#8a8a8a"></div><div style="position:absolute;left:1848.0px;top:515.5px;width:1.0px;height:2.0px;background:#8a8a8a"></div><div style="position:absolute;left:1904.0px;top:515.5px;width:1.0px;height:2.0px;background:#8a8a8a"></div><div style="position:absolute;left:1960.0px;top:515.5px;width:1.0px;height:2.0px;background:#8a8a8a"></div><div style="position:absolute;left:2016.0px;top:515.5px;width:1.0px;height:2.0px;background:#8a8a8a"></div><div style="position:absolute;left:2072.0px;top:515.5px;width:1.0px;height:2.0px;background:#8a8a8a"></div><div style="position:absolute;left:2128.0px;top:515.5px;width:1.0px;height:2.0px;background:#8a8a8a"></div><div style="position:absolute;right:540.5px;top:529.4px;line-height:20px;font-size:14px;color:#cbcbcb;font-weight:normal;font-family:'Liberation Sans',sans-serif;white-space:nowrap;transform:scaleX(0.864);transform-origin:right center;">Search Preference</div><div style="position:absolute;left:1649.7px;top:528.0px;width:95.8px;height:23.7px;background:linear-gradient(#484848,#353535);border:1px solid #1a1a1a;border-radius:2px;box-shadow:0 1px 0 #202020"></div><div style="position:absolute;left:1723.0px;top:529.0px;width:21.5px;height:21.7px;background:linear-gradient(#2b2b2b,#232323)"></div><div style="position:absolute;left:1730.2px;top:533.4px;width:0;height:0;border-left:4px solid transparent;border-right:4px solid transparent;border-bottom:5.5px solid #b0b0b0"></div><div style="position:absolute;left:1730.2px;top:540.9px;width:0;height:0;border-left:4px solid transparent;border-right:4px solid transparent;border-top:5.5px solid #b0b0b0"></div><div style="position:absolute;left:1665.2px;top:529.4px;line-height:20px;font-size:14px;color:#d8d8d8;font-weight:normal;font-family:'Liberation Sans',sans-serif;white-space:nowrap;transform:scaleX(0.864);transform-origin:left center;">Nearest</div><div style="position:absolute;right:540.5px;top:556.9px;line-height:20px;font-size:14px;color:#cbcbcb;font-weight:normal;font-family:'Liberation Sans',sans-serif;white-space:nowrap;transform:scaleX(0.864);transform-origin:right center;">Constraints Per Point</div><div style="position:absolute;left:1649.7px;top:556.3px;width:81.1px;height:23.4px;background:#000;border-top:1px solid #1c1c1c;border-left:1px solid #1c1c1c"></div><div style="position:absolute;left:1653.7px;top:558.5px;line-height:19px;font-size:13px;color:#f0f0f0;font-weight:bold;font-family:'Liberation Mono',monospace;white-space:nowrap;transform:scaleX(1.0);transform-origin:left center;">16</div><div style="position:absolute;left:1736.0px;top:565.0px;width:439.0px;height:5.0px;background:#1f4d9e;border:1px solid #050505;border-radius:2.5px"></div><div style="position:absolute;left:2016.0px;top:570.5px;width:1.0px;height:2.0px;background:#8a8a8a"></div><div style="position:absolute;right:540.5px;top:583.4px;line-height:20px;font-size:14px;color:#cbcbcb;font-weight:normal;font-family:'Liberation Sans',sans-serif;white-space:nowrap;transform:scaleX(0.864);transform-origin:right center;">Detach Object Chance</div><div style="position:absolute;left:1649.7px;top:582.8px;width:81.1px;height:22.2px;background:#000;border-top:1px solid #1c1c1c;border-left:1px solid #1c1c1c"></div><div style="position:absolute;left:1653.7px;top:584.4px;line-height:19px;font-size:13px;color:#f0f0f0;font-weight:normal;font-family:'Liberation Mono',monospace;white-space:nowrap;transform:scaleX(1.0);transform-origin:left center;">0</div><div style="position:absolute;left:1739.0px;top:591.0px;width:436.0px;height:5.0px;background:#000;border-radius:2.5px"></div><div style="position:absolute;left:1733.9px;top:583.3px;width:5.5px;height:21.2px;background:linear-gradient(90deg,#dcdcdc 0,#b8b8b8 30%,#8a8a8a 70%,#5a5a5a);border-radius:1.5px;box-shadow:0 0 0 0.6px #1a1a1a"></div><div style="position:absolute;right:540.5px;top:609.4px;line-height:20px;font-size:14px;color:#cbcbcb;font-weight:normal;font-family:'Liberation Sans',sans-serif;white-space:nowrap;transform:scaleX(0.864);transform-origin:right center;">Detach Point Chance</div><div style="position:absolute;left:1649.7px;top:608.6px;width:81.1px;height:22.8px;background:#000;border-top:1px solid #1c1c1c;border-left:1px solid #1c1c1c"></div><div style="position:absolute;left:1653.7px;top:610.5px;line-height:19px;font-size:13px;color:#f0f0f0;font-weight:normal;font-family:'Liberation Mono',monospace;white-space:nowrap;transform:scaleX(1.0);transform-origin:left center;">0</div><div style="position:absolute;left:1739.0px;top:617.0px;width:436.0px;height:5.0px;background:#000;border-radius:2.5px"></div><div style="position:absolute;left:1733.9px;top:609.1px;width:5.5px;height:21.8px;background:linear-gradient(90deg,#dcdcdc 0,#b8b8b8 30%,#8a8a8a 70%,#5a5a5a);border-radius:1.5px;box-shadow:0 0 0 0.6px #1a1a1a"></div><div style="position:absolute;right:540.5px;top:635.4px;line-height:20px;font-size:14px;color:#cbcbcb;font-weight:normal;font-family:'Liberation Sans',sans-serif;white-space:nowrap;transform:scaleX(0.864);transform-origin:right center;">Seed</div><div style="position:absolute;left:1649.7px;top:634.9px;width:81.1px;height:22.3px;background:#000;border-top:1px solid #1c1c1c;border-left:1px solid #1c1c1c"></div><div style="position:absolute;left:1653.7px;top:636.5px;line-height:19px;font-size:13px;color:#f0f0f0;font-weight:normal;font-family:'Liberation Mono',monospace;white-space:nowrap;transform:scaleX(1.0);transform-origin:left center;">0</div><div style="position:absolute;left:1739.0px;top:643.0px;width:436.0px;height:5.0px;background:#000;border-radius:2.5px"></div><div style="position:absolute;left:1733.9px;top:635.4px;width:5.5px;height:21.3px;background:linear-gradient(90deg,#dcdcdc 0,#b8b8b8 30%,#8a8a8a 70%,#5a5a5a);border-radius:1.5px;box-shadow:0 0 0 0.6px #1a1a1a"></div><div style="position:absolute;left:1482.0px;top:665.5px;width:693.0px;height:26.3px;background:#444444"></div><div style="position:absolute;left:1503.0px;top:667.4px;line-height:20px;font-size:14px;color:#dcdcdc;font-weight:normal;font-family:'Liberation Sans',sans-serif;white-space:nowrap;transform:scaleX(0.864);transform-origin:left center;">Stretch</div><div style="position:absolute;right:540.5px;top:700.9px;line-height:20px;font-size:14px;color:#cbcbcb;font-weight:normal;font-family:'Liberation Sans',sans-serif;white-space:nowrap;transform:scaleX(0.864);transform-origin:right center;">Stiffness</div><div style="position:absolute;left:1649.7px;top:700.3px;width:81.1px;height:23.2px;background:#000;border-top:1px solid #1c1c1c;border-left:1px solid #1c1c1c"></div><div style="position:absolute;left:1653.7px;top:702.4px;line-height:19px;font-size:13px;color:#f0f0f0;font-weight:normal;font-family:'Liberation Mono',monospace;white-space:nowrap;transform:scaleX(1.0);transform-origin:left center;">1</div><div style="position:absolute;left:1737.0px;top:709.3px;width:275.5px;height:5.0px;background:#000;border-radius:2.5px"></div><div style="position:absolute;left:1737.0px;top:710.0px;width:26.0px;height:3.6px;background:#1d4a9c"></div><div style="position:absolute;left:1761.8px;top:700.7px;width:5.5px;height:21.7px;background:linear-gradient(90deg,#dcdcdc 0,#b8b8b8 30%,#8a8a8a 70%,#5a5a5a);border-radius:1.5px;box-shadow:0 0 0 0.6px #1a1a1a"></div><div style="position:absolute;left:2024.5px;top:701.5px;line-height:19px;font-size:13px;color:#b8b8b8;font-weight:normal;font-family:'Liberation Sans',sans-serif;white-space:nowrap;transform:scaleX(1);transform-origin:left center;">×</div><div style="position:absolute;left:2048.0px;top:698.7px;width:101.4px;height:23.4px;background:linear-gradient(#484848,#353535);border:1px solid #1a1a1a;border-radius:2px;box-shadow:0 1px 0 #202020"></div><div style="position:absolute;left:2127.0px;top:699.7px;width:21.4px;height:21.4px;background:linear-gradient(#2b2b2b,#232323)"></div><div style="position:absolute;left:2134.2px;top:703.9px;width:0;height:0;border-left:4px solid transparent;border-right:4px solid transparent;border-bottom:5.5px solid #b0b0b0"></div><div style="position:absolute;left:2134.2px;top:711.4px;width:0;height:0;border-left:4px solid transparent;border-right:4px solid transparent;border-top:5.5px solid #b0b0b0"></div><div style="position:absolute;left:2062.0px;top:699.9px;line-height:20px;font-size:14px;color:#d8d8d8;font-weight:normal;font-family:'Liberation Sans',sans-serif;white-space:nowrap;transform:scaleX(0.864);transform-origin:left center;">1e+10</div><div style="position:absolute;left:2152.8px;top:698.7px;width:30.0px;height:23.4px;background:linear-gradient(#444,#333);border:1px solid #1a1a1a;border-radius:2px"></div><div style="position:absolute;left:2166.0px;top:701.0px;line-height:19px;font-size:13px;color:#d8d8d8;font-weight:normal;font-family:'Liberation Sans',sans-serif;white-space:nowrap;transform:scaleX(0.93);transform-origin:left center;">N</div><div style="position:absolute;right:540.5px;top:729.9px;line-height:20px;font-size:14px;color:#cbcbcb;font-weight:normal;font-family:'Liberation Sans',sans-serif;white-space:nowrap;transform:scaleX(0.864);transform-origin:right center;">Damping Ratio</div><div style="position:absolute;left:1649.7px;top:729.2px;width:81.1px;height:23.2px;background:#000;border-top:1px solid #1c1c1c;border-left:1px solid #1c1c1c"></div><div style="position:absolute;left:1653.7px;top:731.3px;line-height:19px;font-size:13px;color:#f0f0f0;font-weight:normal;font-family:'Liberation Mono',monospace;white-space:nowrap;transform:scaleX(1.0);transform-origin:left center;">0.001</div><div style="position:absolute;left:1739.0px;top:738.0px;width:411.0px;height:5.0px;background:#000;border-radius:2.5px"></div><div style="position:absolute;left:1733.9px;top:729.5px;width:5.5px;height:22.5px;background:linear-gradient(90deg,#dcdcdc 0,#b8b8b8 30%,#8a8a8a 70%,#5a5a5a);border-radius:1.5px;box-shadow:0 0 0 0.6px #1a1a1a"></div><div style="position:absolute;left:2152.8px;top:728.4px;width:30.0px;height:23.0px;background:linear-gradient(#444,#333);border:1px solid #1a1a1a;border-radius:2px"></div><div style="position:absolute;left:2166.0px;top:730.5px;line-height:19px;font-size:13px;color:#d8d8d8;font-weight:normal;font-family:'Liberation Sans',sans-serif;white-space:nowrap;transform:scaleX(0.93);transform-origin:left center;">N</div><div style="position:absolute;right:540.5px;top:756.9px;line-height:20px;font-size:14px;color:#cbcbcb;font-weight:normal;font-family:'Liberation Sans',sans-serif;white-space:nowrap;transform:scaleX(0.864);transform-origin:right center;">Rest Length Scale</div><div style="position:absolute;left:1649.7px;top:756.1px;width:81.1px;height:23.2px;background:#000;border-top:1px solid #1c1c1c;border-left:1px solid #1c1c1c"></div><div style="position:absolute;left:1653.7px;top:758.2px;line-height:19px;font-size:13px;color:#f0f0f0;font-weight:normal;font-family:'Liberation Mono',monospace;white-space:nowrap;transform:scaleX(1.0);transform-origin:left center;">1</div><div style="position:absolute;left:1735.0px;top:765.3px;width:440.0px;height:5.0px;background:#000;border-radius:2.5px"></div><div style="position:absolute;left:1736.0px;top:766.0px;width:279.0px;height:3.6px;background:#1d4a9c"></div><div style="position:absolute;left:2014.6px;top:757.2px;width:5.5px;height:20.9px;background:linear-gradient(90deg,#dcdcdc 0,#b8b8b8 30%,#8a8a8a 70%,#5a5a5a);border-radius:1.5px;box-shadow:0 0 0 0.6px #1a1a1a"></div><div style="position:absolute;left:1501.0px;top:789.2px;width:15.0px;height:14.5px;background:#000;border:1px solid #1e1e1e"></div><div style="position:absolute;right:540.5px;top:784.9px;line-height:20px;font-size:14px;color:#868686;font-weight:normal;font-family:'Liberation Sans',sans-serif;white-space:nowrap;transform:scaleX(0.864);transform-origin:right center;">Compression Stiff...</div><div style="position:absolute;left:1649.7px;top:784.0px;width:81.1px;height:23.7px;background:#262626;border-top:1px solid #222"></div><div style="position:absolute;left:1653.7px;top:786.4px;line-height:19px;font-size:13px;color:#5c5c5c;font-weight:normal;font-family:'Liberation Mono',monospace;white-space:nowrap;transform:scaleX(1.0);transform-origin:left center;">1</div><div style="position:absolute;left:1737.0px;top:793.3px;width:275.5px;height:5.0px;background:#282828;border-radius:2.5px"></div><div style="position:absolute;left:1761.8px;top:785.0px;width:6.0px;height:21.0px;background:#444;border:1px solid #2c2c2c;border-radius:1.5px"></div><div style="position:absolute;left:2024.5px;top:785.5px;line-height:19px;font-size:13px;color:#777;font-weight:normal;font-family:'Liberation Sans',sans-serif;white-space:nowrap;transform:scaleX(1);transform-origin:left center;">×</div><div style="position:absolute;left:2048.0px;top:782.7px;width:101.4px;height:23.7px;background:#2a2a2a;border:1px solid #262626;border-radius:2px"></div><div style="position:absolute;left:2127.0px;top:783.7px;width:21.4px;height:21.7px;background:#262626"></div><div style="position:absolute;left:2134.2px;top:788.0px;width:0;height:0;border-left:4px solid transparent;border-right:4px solid transparent;border-bottom:5.5px solid #555"></div><div style="position:absolute;left:2134.2px;top:795.5px;width:0;height:0;border-left:4px solid transparent;border-right:4px solid transparent;border-top:5.5px solid #555"></div><div style="position:absolute;left:2062.0px;top:784.0px;line-height:20px;font-size:14px;color:#6a6a6a;font-weight:normal;font-family:'Liberation Sans',sans-serif;white-space:nowrap;transform:scaleX(0.864);transform-origin:left center;">1 000</div><div style="position:absolute;left:2152.8px;top:782.7px;width:30.0px;height:23.7px;background:#2a2a2a;border:1px solid #262626;border-radius:2px"></div><div style="position:absolute;left:2166.0px;top:785.0px;line-height:19px;font-size:13px;color:#6a6a6a;font-weight:normal;font-family:'Liberation Sans',sans-serif;white-space:nowrap;transform:scaleX(0.93);transform-origin:left center;">N</div><div style="position:absolute;left:1501.0px;top:818.2px;width:15.0px;height:14.5px;background:#000;border:1px solid #1e1e1e"></div><div style="position:absolute;right:540.5px;top:813.9px;line-height:20px;font-size:14px;color:#868686;font-weight:normal;font-family:'Liberation Sans',sans-serif;white-space:nowrap;transform:scaleX(0.864);transform-origin:right center;">Stiffness Dropoff</div><div style="position:absolute;left:1649.7px;top:813.0px;width:81.1px;height:23.6px;background:#262626;border-top:1px solid #222"></div><div style="position:absolute;left:1653.7px;top:815.3px;line-height:19px;font-size:13px;color:#5c5c5c;font-weight:normal;font-family:'Liberation Mono',monospace;white-space:nowrap;transform:scaleX(1.0);transform-origin:left center;">0</div><div style="position:absolute;left:1737.0px;top:822.3px;width:438.0px;height:5.0px;background:#282828;border-radius:2.5px"></div><div style="position:absolute;left:1733.9px;top:814.0px;width:6.0px;height:22.0px;background:#444;border:1px solid #2c2c2c;border-radius:1.5px"></div><div style="position:absolute;left:1650.0px;top:843.5px;width:15.0px;height:14.5px;background:#000;border:1px solid #1e1e1e"></div><div style="position:absolute;left:1674.5px;top:839.0px;line-height:20px;font-size:14px;color:#cbcbcb;font-weight:normal;font-family:'Liberation Sans',sans-serif;white-space:nowrap;transform:scaleX(0.864);transform-origin:left center;">Enable Plasticity</div><div style="position:absolute;left:1501.0px;top:867.0px;width:15.0px;height:14.5px;background:#000;border:1px solid #1e1e1e"></div><div style="position:absolute;right:540.5px;top:863.4px;line-height:20px;font-size:14px;color:#868686;font-weight:normal;font-family:'Liberation Sans',sans-serif;white-space:nowrap;transform:scaleX(0.864);transform-origin:right center;">Output Group</div><div style="position:absolute;left:1649.7px;top:862.3px;width:525.3px;height:23.2px;background:#262626;border-top:1px solid #222"></div><div style="position:absolute;left:1653.7px;top:864.4px;line-height:19px;font-size:13px;color:#5c5c5c;font-weight:normal;font-family:'Liberation Mono',monospace;white-space:nowrap;transform:scaleX(1.0);transform-origin:left center;">stretch</div><div style="position:absolute;left:1650.0px;top:891.3px;width:15.0px;height:14.5px;background:#2a2a2a;border:1px solid #1e1e1e"></div><svg style="position:absolute;left:1651px;top:890.3px" width="14" height="15"><path d="M2 8 L5.5 12.5 L12 2.5 L6 9.5 Z" fill="#8a8a8a" stroke="#8a8a8a" stroke-width="1.6" stroke-linejoin="round"/></svg><div style="position:absolute;left:1674.5px;top:887.0px;line-height:20px;font-size:14px;color:#868686;font-weight:normal;font-family:'Liberation Sans',sans-serif;white-space:nowrap;transform:scaleX(0.864);transform-origin:left center;">Keep Unique within Output Group</div><div style="position:absolute;left:1482.0px;top:916.0px;width:693.0px;height:27.0px;background:#444444"></div><div style="position:absolute;left:1503.0px;top:918.3px;line-height:20px;font-size:14px;color:#dcdcdc;font-weight:normal;font-family:'Liberation Sans',sans-serif;white-space:nowrap;transform:scaleX(0.864);transform-origin:left center;">Breaking</div><div style="position:absolute;left:1475.0px;top:546.3px;width:285.5px;height:39.5px;border:2.8px solid #ee3c3c"></div>
</div></body></html>
